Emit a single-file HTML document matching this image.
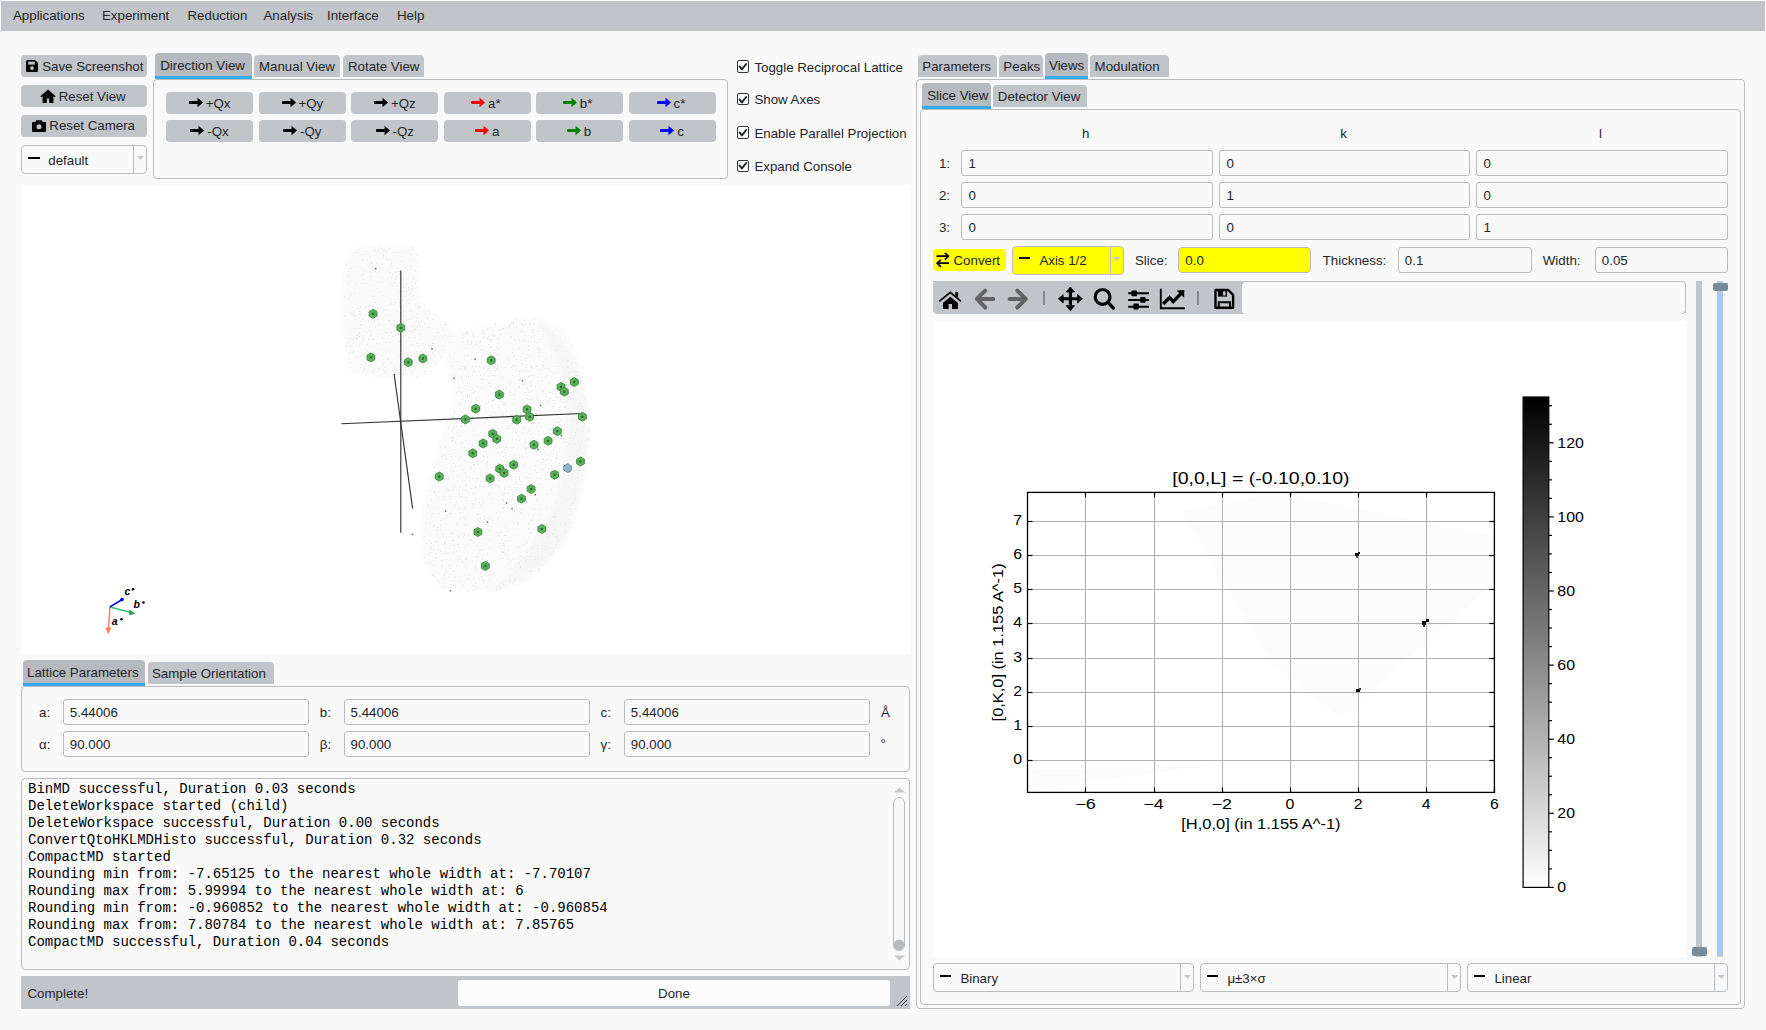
<!DOCTYPE html><html><head><meta charset="utf-8"><style>html,body{margin:0;padding:0;}body{width:1766px;height:1030px;position:relative;overflow:hidden;background:#f9f9f9;}</style></head><body>
<div style="position:absolute;left:0.00px;top:0.00px;width:1766.00px;height:1.00px;background:#fdfdfd"></div>
<div style="position:absolute;left:1.00px;top:1.00px;width:1764.00px;height:30.00px;background:#c1c4c8"></div>
<div style="position:absolute;left:13.00px;top:8.94px;font:13.3px/13.3px 'Liberation Sans', sans-serif;color:#232629;white-space:pre;">Applications</div>
<div style="position:absolute;left:102.00px;top:8.94px;font:13.3px/13.3px 'Liberation Sans', sans-serif;color:#232629;white-space:pre;">Experiment</div>
<div style="position:absolute;left:187.50px;top:8.94px;font:13.3px/13.3px 'Liberation Sans', sans-serif;color:#232629;white-space:pre;">Reduction</div>
<div style="position:absolute;left:263.50px;top:8.94px;font:13.3px/13.3px 'Liberation Sans', sans-serif;color:#232629;white-space:pre;">Analysis</div>
<div style="position:absolute;left:327.00px;top:8.94px;font:13.3px/13.3px 'Liberation Sans', sans-serif;color:#232629;white-space:pre;">Interface</div>
<div style="position:absolute;left:397.00px;top:8.94px;font:13.3px/13.3px 'Liberation Sans', sans-serif;color:#232629;white-space:pre;">Help</div>
<div style="position:absolute;left:21.00px;top:55.00px;width:126.00px;height:22.00px;background:#c1c4c8;border-radius:4px"></div>
<svg style="position:absolute;left:26.00px;top:60.00px;" width="12" height="12" viewBox="0 0 12 12"><path d="M1.5 0h7.5l3 3v7.5q0 1.5-1.5 1.5h-9q-1.5 0-1.5-1.5v-9q0-1.5 1.5-1.5z" fill="#000"/><rect x="2.2" y="1.6" width="6.6" height="3" fill="#c1c4c8"/><circle cx="6" cy="8.1" r="1.9" fill="#c1c4c8"/></svg>
<div style="position:absolute;left:42.20px;top:59.74px;font:13.3px/13.3px 'Liberation Sans', sans-serif;color:#232629;white-space:pre;">Save Screenshot</div>
<div style="position:absolute;left:21.00px;top:85.00px;width:126.00px;height:22.00px;background:#c1c4c8;border-radius:4px"></div>
<svg style="position:absolute;left:40.00px;top:89.00px;" width="16" height="14" viewBox="0 0 16 14"><path d="M8 0.5L0.3 7.2l1 1.1L2.6 7.2V14h4.2V9.6h2.4V14h4.2V7.2l1.3 1.1 1-1.1z" fill="#000"/></svg>
<div style="position:absolute;left:58.70px;top:89.74px;font:13.3px/13.3px 'Liberation Sans', sans-serif;color:#232629;white-space:pre;">Reset View</div>
<div style="position:absolute;left:21.00px;top:115.00px;width:126.00px;height:22.00px;background:#c1c4c8;border-radius:4px"></div>
<svg style="position:absolute;left:32.00px;top:118.50px;" width="14" height="13" viewBox="0 0 14 13"><path d="M4.3 1.2h5.4l1 1.8h2.3q1 0 1 1v8q0 1-1 1h-12q-1 0-1-1v-8q0-1 1-1h2.3z" fill="#000"/><circle cx="7" cy="7.7" r="2.5" fill="#c1c4c8"/></svg>
<div style="position:absolute;left:49.30px;top:119.24px;font:13.3px/13.3px 'Liberation Sans', sans-serif;color:#232629;white-space:pre;">Reset Camera</div>
<div style="position:absolute;box-sizing:border-box;left:21.00px;top:145.00px;width:126.00px;height:29.00px;border:1px solid #b9bdc2;border-radius:4px;background:#f9f9f9"></div>
<div style="position:absolute;left:133.00px;top:146.00px;width:1.00px;height:27.00px;background:#b9bdc2"></div>
<div style="position:absolute;left:28.40px;top:157.30px;width:11.30px;height:2.00px;background:#000"></div>
<div style="position:absolute;left:48.30px;top:153.74px;font:13.3px/13.3px 'Liberation Sans', sans-serif;color:#232629;white-space:pre;">default</div>
<svg style="position:absolute;left:136.50px;top:156.00px;" width="7" height="5" viewBox="0 0 7 5"><path d="M0 0h7l-3.5 4z" fill="#c4c7cb"/></svg>
<div style="position:absolute;left:155.00px;top:53.00px;width:96.50px;height:25.60px;background:#b6b9bd;border-radius:4px 4px 0 0"></div>
<div style="position:absolute;left:155.00px;top:75.60px;width:96.50px;height:3.00px;background:#33aaf2"></div>
<div style="position:absolute;left:160.20px;top:59.04px;font:13.3px/13.3px 'Liberation Sans', sans-serif;color:#232629;white-space:pre;">Direction View</div>
<div style="position:absolute;left:254.00px;top:55.00px;width:86.00px;height:22.00px;background:#c1c4c8;border-radius:4px 4px 0 0"></div>
<div style="position:absolute;left:259.00px;top:59.74px;font:13.3px/13.3px 'Liberation Sans', sans-serif;color:#232629;white-space:pre;">Manual View</div>
<div style="position:absolute;left:343.00px;top:55.00px;width:81.00px;height:22.00px;background:#c1c4c8;border-radius:4px 4px 0 0"></div>
<div style="position:absolute;left:348.00px;top:59.74px;font:13.3px/13.3px 'Liberation Sans', sans-serif;color:#232629;white-space:pre;">Rotate View</div>
<div style="position:absolute;box-sizing:border-box;left:153.00px;top:79.00px;width:575.00px;height:100.00px;border:1px solid #b9bdc2;border-radius:4px"></div>
<div style="position:absolute;left:166.00px;top:92.00px;width:86.50px;height:22.00px;background:#c1c4c8;border-radius:4px"></div>
<svg style="position:absolute;left:188.75px;top:96.80px;" width="14" height="11" viewBox="0 0 14 11"><path d="M1 4h7.5V0.8L14 5.5 8.5 10.2V7H1Q0 7 0 6V5Q0 4 1 4z" fill="#000"/></svg>
<div style="position:absolute;left:205.75px;top:96.74px;font:13.3px/13.3px 'Liberation Sans', sans-serif;color:#232629;white-space:pre;">+Qx</div>
<div style="position:absolute;left:259.00px;top:92.00px;width:86.50px;height:22.00px;background:#c1c4c8;border-radius:4px"></div>
<svg style="position:absolute;left:281.50px;top:96.80px;" width="14" height="11" viewBox="0 0 14 11"><path d="M1 4h7.5V0.8L14 5.5 8.5 10.2V7H1Q0 7 0 6V5Q0 4 1 4z" fill="#000"/></svg>
<div style="position:absolute;left:298.50px;top:96.74px;font:13.3px/13.3px 'Liberation Sans', sans-serif;color:#232629;white-space:pre;">+Qy</div>
<div style="position:absolute;left:351.00px;top:92.00px;width:86.50px;height:22.00px;background:#c1c4c8;border-radius:4px"></div>
<svg style="position:absolute;left:374.00px;top:96.80px;" width="14" height="11" viewBox="0 0 14 11"><path d="M1 4h7.5V0.8L14 5.5 8.5 10.2V7H1Q0 7 0 6V5Q0 4 1 4z" fill="#000"/></svg>
<div style="position:absolute;left:391.00px;top:96.74px;font:13.3px/13.3px 'Liberation Sans', sans-serif;color:#232629;white-space:pre;">+Qz</div>
<div style="position:absolute;left:444.00px;top:92.00px;width:86.50px;height:22.00px;background:#c1c4c8;border-radius:4px"></div>
<svg style="position:absolute;left:471.00px;top:96.80px;" width="14" height="11" viewBox="0 0 14 11"><path d="M1 4h7.5V0.8L14 5.5 8.5 10.2V7H1Q0 7 0 6V5Q0 4 1 4z" fill="#ff0000"/></svg>
<div style="position:absolute;left:488.00px;top:96.74px;font:13.3px/13.3px 'Liberation Sans', sans-serif;color:#232629;white-space:pre;">a*</div>
<div style="position:absolute;left:536.00px;top:92.00px;width:86.50px;height:22.00px;background:#c1c4c8;border-radius:4px"></div>
<svg style="position:absolute;left:562.75px;top:96.80px;" width="14" height="11" viewBox="0 0 14 11"><path d="M1 4h7.5V0.8L14 5.5 8.5 10.2V7H1Q0 7 0 6V5Q0 4 1 4z" fill="#008000"/></svg>
<div style="position:absolute;left:579.75px;top:96.74px;font:13.3px/13.3px 'Liberation Sans', sans-serif;color:#232629;white-space:pre;">b*</div>
<div style="position:absolute;left:629.00px;top:92.00px;width:86.50px;height:22.00px;background:#c1c4c8;border-radius:4px"></div>
<svg style="position:absolute;left:656.50px;top:96.80px;" width="14" height="11" viewBox="0 0 14 11"><path d="M1 4h7.5V0.8L14 5.5 8.5 10.2V7H1Q0 7 0 6V5Q0 4 1 4z" fill="#0000ff"/></svg>
<div style="position:absolute;left:673.50px;top:96.74px;font:13.3px/13.3px 'Liberation Sans', sans-serif;color:#232629;white-space:pre;">c*</div>
<div style="position:absolute;left:166.00px;top:120.00px;width:86.50px;height:22.00px;background:#c1c4c8;border-radius:4px"></div>
<svg style="position:absolute;left:190.25px;top:124.80px;" width="14" height="11" viewBox="0 0 14 11"><path d="M1 4h7.5V0.8L14 5.5 8.5 10.2V7H1Q0 7 0 6V5Q0 4 1 4z" fill="#000"/></svg>
<div style="position:absolute;left:207.25px;top:124.74px;font:13.3px/13.3px 'Liberation Sans', sans-serif;color:#232629;white-space:pre;">-Qx</div>
<div style="position:absolute;left:259.00px;top:120.00px;width:86.50px;height:22.00px;background:#c1c4c8;border-radius:4px"></div>
<svg style="position:absolute;left:283.00px;top:124.80px;" width="14" height="11" viewBox="0 0 14 11"><path d="M1 4h7.5V0.8L14 5.5 8.5 10.2V7H1Q0 7 0 6V5Q0 4 1 4z" fill="#000"/></svg>
<div style="position:absolute;left:300.00px;top:124.74px;font:13.3px/13.3px 'Liberation Sans', sans-serif;color:#232629;white-space:pre;">-Qy</div>
<div style="position:absolute;left:351.00px;top:120.00px;width:86.50px;height:22.00px;background:#c1c4c8;border-radius:4px"></div>
<svg style="position:absolute;left:375.50px;top:124.80px;" width="14" height="11" viewBox="0 0 14 11"><path d="M1 4h7.5V0.8L14 5.5 8.5 10.2V7H1Q0 7 0 6V5Q0 4 1 4z" fill="#000"/></svg>
<div style="position:absolute;left:392.50px;top:124.74px;font:13.3px/13.3px 'Liberation Sans', sans-serif;color:#232629;white-space:pre;">-Qz</div>
<div style="position:absolute;left:444.00px;top:120.00px;width:86.50px;height:22.00px;background:#c1c4c8;border-radius:4px"></div>
<svg style="position:absolute;left:475.00px;top:124.80px;" width="14" height="11" viewBox="0 0 14 11"><path d="M1 4h7.5V0.8L14 5.5 8.5 10.2V7H1Q0 7 0 6V5Q0 4 1 4z" fill="#ff0000"/></svg>
<div style="position:absolute;left:492.00px;top:124.74px;font:13.3px/13.3px 'Liberation Sans', sans-serif;color:#232629;white-space:pre;">a</div>
<div style="position:absolute;left:536.00px;top:120.00px;width:86.50px;height:22.00px;background:#c1c4c8;border-radius:4px"></div>
<svg style="position:absolute;left:566.75px;top:124.80px;" width="14" height="11" viewBox="0 0 14 11"><path d="M1 4h7.5V0.8L14 5.5 8.5 10.2V7H1Q0 7 0 6V5Q0 4 1 4z" fill="#008000"/></svg>
<div style="position:absolute;left:583.75px;top:124.74px;font:13.3px/13.3px 'Liberation Sans', sans-serif;color:#232629;white-space:pre;">b</div>
<div style="position:absolute;left:629.00px;top:120.00px;width:86.50px;height:22.00px;background:#c1c4c8;border-radius:4px"></div>
<svg style="position:absolute;left:660.25px;top:124.80px;" width="14" height="11" viewBox="0 0 14 11"><path d="M1 4h7.5V0.8L14 5.5 8.5 10.2V7H1Q0 7 0 6V5Q0 4 1 4z" fill="#0000ff"/></svg>
<div style="position:absolute;left:677.25px;top:124.74px;font:13.3px/13.3px 'Liberation Sans', sans-serif;color:#232629;white-space:pre;">c</div>
<div style="position:absolute;box-sizing:border-box;left:736.50px;top:60.40px;width:12.50px;height:12.20px;border:1px solid #31363b;border-radius:2px;background:#fcfcfc"></div>
<svg style="position:absolute;left:738.00px;top:61.90px;" width="10" height="9" viewBox="0 0 10 9"><path d="M1.6 4.6L3.9 7.4 8.2 2" stroke="#232629" stroke-width="2" fill="none" stroke-linejoin="round" stroke-linecap="round"/></svg>
<div style="position:absolute;left:754.40px;top:60.74px;font:13.3px/13.3px 'Liberation Sans', sans-serif;color:#232629;white-space:pre;">Toggle Reciprocal Lattice</div>
<div style="position:absolute;box-sizing:border-box;left:736.50px;top:93.00px;width:12.50px;height:12.20px;border:1px solid #31363b;border-radius:2px;background:#fcfcfc"></div>
<svg style="position:absolute;left:738.00px;top:94.50px;" width="10" height="9" viewBox="0 0 10 9"><path d="M1.6 4.6L3.9 7.4 8.2 2" stroke="#232629" stroke-width="2" fill="none" stroke-linejoin="round" stroke-linecap="round"/></svg>
<div style="position:absolute;left:754.40px;top:93.34px;font:13.3px/13.3px 'Liberation Sans', sans-serif;color:#232629;white-space:pre;">Show Axes</div>
<div style="position:absolute;box-sizing:border-box;left:736.50px;top:126.40px;width:12.50px;height:12.20px;border:1px solid #31363b;border-radius:2px;background:#fcfcfc"></div>
<svg style="position:absolute;left:738.00px;top:127.90px;" width="10" height="9" viewBox="0 0 10 9"><path d="M1.6 4.6L3.9 7.4 8.2 2" stroke="#232629" stroke-width="2" fill="none" stroke-linejoin="round" stroke-linecap="round"/></svg>
<div style="position:absolute;left:754.40px;top:126.74px;font:13.3px/13.3px 'Liberation Sans', sans-serif;color:#232629;white-space:pre;">Enable Parallel Projection</div>
<div style="position:absolute;box-sizing:border-box;left:736.50px;top:159.60px;width:12.50px;height:12.20px;border:1px solid #31363b;border-radius:2px;background:#fcfcfc"></div>
<svg style="position:absolute;left:738.00px;top:161.10px;" width="10" height="9" viewBox="0 0 10 9"><path d="M1.6 4.6L3.9 7.4 8.2 2" stroke="#232629" stroke-width="2" fill="none" stroke-linejoin="round" stroke-linecap="round"/></svg>
<div style="position:absolute;left:754.40px;top:159.94px;font:13.3px/13.3px 'Liberation Sans', sans-serif;color:#232629;white-space:pre;">Expand Console</div>
<div style="position:absolute;left:21.00px;top:185.00px;width:889.00px;height:469.00px;background:#fff"></div>
<div style="position:absolute;left:23.00px;top:659.80px;width:122.30px;height:26.00px;background:#b6b9bd;border-radius:4px 4px 0 0"></div>
<div style="position:absolute;left:23.00px;top:682.80px;width:122.30px;height:3.00px;background:#33aaf2"></div>
<div style="position:absolute;left:27.00px;top:666.24px;font:13.3px/13.3px 'Liberation Sans', sans-serif;color:#232629;white-space:pre;">Lattice Parameters</div>
<div style="position:absolute;left:148.40px;top:661.90px;width:126.10px;height:22.10px;background:#c1c4c8;border-radius:4px 4px 0 0"></div>
<div style="position:absolute;left:152.00px;top:667.24px;font:13.3px/13.3px 'Liberation Sans', sans-serif;color:#232629;white-space:pre;">Sample Orientation</div>
<div style="position:absolute;box-sizing:border-box;left:21.00px;top:686.00px;width:889.00px;height:86.00px;border:1px solid #b9bdc2;border-radius:4px"></div>
<div style="position:absolute;left:39.00px;top:705.74px;font:13.3px/13.3px 'Liberation Sans', sans-serif;color:#232629;white-space:pre;">a:</div>
<div style="position:absolute;box-sizing:border-box;left:63.00px;top:699.00px;width:246.00px;height:26.00px;border:1px solid #b9bdc2;border-radius:3px;background:#f9f9f9"></div>
<div style="position:absolute;left:69.80px;top:705.74px;font:13.3px/13.3px 'Liberation Sans', sans-serif;color:#232629;white-space:pre;">5.44006</div>
<div style="position:absolute;left:319.80px;top:705.74px;font:13.3px/13.3px 'Liberation Sans', sans-serif;color:#232629;white-space:pre;">b:</div>
<div style="position:absolute;box-sizing:border-box;left:344.00px;top:699.00px;width:246.00px;height:26.00px;border:1px solid #b9bdc2;border-radius:3px;background:#f9f9f9"></div>
<div style="position:absolute;left:350.55px;top:705.74px;font:13.3px/13.3px 'Liberation Sans', sans-serif;color:#232629;white-space:pre;">5.44006</div>
<div style="position:absolute;left:600.50px;top:705.74px;font:13.3px/13.3px 'Liberation Sans', sans-serif;color:#232629;white-space:pre;">c:</div>
<div style="position:absolute;box-sizing:border-box;left:624.00px;top:699.00px;width:246.00px;height:26.00px;border:1px solid #b9bdc2;border-radius:3px;background:#f9f9f9"></div>
<div style="position:absolute;left:630.80px;top:705.74px;font:13.3px/13.3px 'Liberation Sans', sans-serif;color:#232629;white-space:pre;">5.44006</div>
<div style="position:absolute;left:39.00px;top:737.74px;font:13.3px/13.3px 'Liberation Sans', sans-serif;color:#232629;white-space:pre;">α:</div>
<div style="position:absolute;box-sizing:border-box;left:63.00px;top:731.00px;width:246.00px;height:26.00px;border:1px solid #b9bdc2;border-radius:3px;background:#f9f9f9"></div>
<div style="position:absolute;left:69.80px;top:737.74px;font:13.3px/13.3px 'Liberation Sans', sans-serif;color:#232629;white-space:pre;">90.000</div>
<div style="position:absolute;left:319.80px;top:737.74px;font:13.3px/13.3px 'Liberation Sans', sans-serif;color:#232629;white-space:pre;">β:</div>
<div style="position:absolute;box-sizing:border-box;left:344.00px;top:731.00px;width:246.00px;height:26.00px;border:1px solid #b9bdc2;border-radius:3px;background:#f9f9f9"></div>
<div style="position:absolute;left:350.55px;top:737.74px;font:13.3px/13.3px 'Liberation Sans', sans-serif;color:#232629;white-space:pre;">90.000</div>
<div style="position:absolute;left:600.50px;top:737.74px;font:13.3px/13.3px 'Liberation Sans', sans-serif;color:#232629;white-space:pre;">γ:</div>
<div style="position:absolute;box-sizing:border-box;left:624.00px;top:731.00px;width:246.00px;height:26.00px;border:1px solid #b9bdc2;border-radius:3px;background:#f9f9f9"></div>
<div style="position:absolute;left:630.80px;top:737.74px;font:13.3px/13.3px 'Liberation Sans', sans-serif;color:#232629;white-space:pre;">90.000</div>
<div style="position:absolute;left:881.00px;top:705.74px;font:13.3px/13.3px 'Liberation Sans', sans-serif;color:#232629;white-space:pre;">Å</div>
<div style="position:absolute;left:880.50px;top:737.44px;font:13.3px/13.3px 'Liberation Sans', sans-serif;color:#232629;white-space:pre;">°</div>
<div style="position:absolute;box-sizing:border-box;left:21.00px;top:778.00px;width:889.00px;height:192.00px;border:1px solid #b9bdc2;border-radius:4px;background:#f9f9f9"></div>
<div style="position:absolute;left:28.00px;top:782.17px;font:14px/14px 'Liberation Mono', monospace;color:#000;white-space:pre;">BinMD successful, Duration 0.03 seconds</div>
<div style="position:absolute;left:28.00px;top:799.17px;font:14px/14px 'Liberation Mono', monospace;color:#000;white-space:pre;">DeleteWorkspace started (child)</div>
<div style="position:absolute;left:28.00px;top:816.17px;font:14px/14px 'Liberation Mono', monospace;color:#000;white-space:pre;">DeleteWorkspace successful, Duration 0.00 seconds</div>
<div style="position:absolute;left:28.00px;top:833.17px;font:14px/14px 'Liberation Mono', monospace;color:#000;white-space:pre;">ConvertQtoHKLMDHisto successful, Duration 0.32 seconds</div>
<div style="position:absolute;left:28.00px;top:850.17px;font:14px/14px 'Liberation Mono', monospace;color:#000;white-space:pre;">CompactMD started</div>
<div style="position:absolute;left:28.00px;top:867.17px;font:14px/14px 'Liberation Mono', monospace;color:#000;white-space:pre;">Rounding min from: -7.65125 to the nearest whole width at: -7.70107</div>
<div style="position:absolute;left:28.00px;top:884.17px;font:14px/14px 'Liberation Mono', monospace;color:#000;white-space:pre;">Rounding max from: 5.99994 to the nearest whole width at: 6</div>
<div style="position:absolute;left:28.00px;top:901.17px;font:14px/14px 'Liberation Mono', monospace;color:#000;white-space:pre;">Rounding min from: -0.960852 to the nearest whole width at: -0.960854</div>
<div style="position:absolute;left:28.00px;top:918.17px;font:14px/14px 'Liberation Mono', monospace;color:#000;white-space:pre;">Rounding max from: 7.80784 to the nearest whole width at: 7.85765</div>
<div style="position:absolute;left:28.00px;top:935.17px;font:14px/14px 'Liberation Mono', monospace;color:#000;white-space:pre;">CompactMD successful, Duration 0.04 seconds</div>
<svg style="position:absolute;left:893.00px;top:786.00px;" width="13" height="8" viewBox="0 0 13 8"><path d="M1 6.5L6.5 1.5 12 6.5z" fill="#c4c7cb"/></svg>
<div style="position:absolute;box-sizing:border-box;left:893.00px;top:797.00px;width:12.00px;height:154.00px;border:1px solid #b9bdc2;border-radius:6px"></div>
<svg style="position:absolute;left:893.00px;top:939.00px;" width="12" height="12" viewBox="0 0 12 12"><circle cx="6" cy="6" r="5.5" fill="#b7bbbf"/></svg>
<svg style="position:absolute;left:893.00px;top:954.00px;" width="13" height="8" viewBox="0 0 13 8"><path d="M1 1.5L6.5 6.5 12 1.5z" fill="#c4c7cb"/></svg>
<div style="position:absolute;left:21.00px;top:976.00px;width:889.00px;height:33.00px;background:#c1c4c8"></div>
<div style="position:absolute;left:27.50px;top:986.74px;font:13.3px/13.3px 'Liberation Sans', sans-serif;color:#232629;white-space:pre;">Complete!</div>
<div style="position:absolute;left:458.00px;top:980.00px;width:432.00px;height:26.00px;background:#fcfcfc;border-radius:3px"></div>
<div style="position:absolute;left:174.00px;width:1000px;text-align:center;top:986.74px;font:13.3px/13.3px 'Liberation Sans', sans-serif;color:#232629;white-space:pre;">Done</div>
<svg style="position:absolute;left:896.00px;top:995.00px;" width="12" height="12" viewBox="0 0 12 12"><path d="M11 1L1 11M11 5L5 11M11 9L9 11" stroke="#31363b" stroke-width="1"/></svg>
<div style="position:absolute;left:918.00px;top:55.00px;width:78.50px;height:22.00px;background:#c1c4c8;border-radius:4px 4px 0 0"></div>
<div style="position:absolute;left:922.30px;top:59.94px;font:13.3px/13.3px 'Liberation Sans', sans-serif;color:#232629;white-space:pre;">Parameters</div>
<div style="position:absolute;left:999.00px;top:55.00px;width:44.00px;height:22.00px;background:#c1c4c8;border-radius:4px 4px 0 0"></div>
<div style="position:absolute;left:1003.30px;top:59.94px;font:13.3px/13.3px 'Liberation Sans', sans-serif;color:#232629;white-space:pre;">Peaks</div>
<div style="position:absolute;left:1045.00px;top:53.00px;width:42.50px;height:25.60px;background:#b6b9bd;border-radius:4px 4px 0 0"></div>
<div style="position:absolute;left:1045.00px;top:75.60px;width:42.50px;height:3.00px;background:#33aaf2"></div>
<div style="position:absolute;left:1049.00px;top:59.24px;font:13.3px/13.3px 'Liberation Sans', sans-serif;color:#232629;white-space:pre;">Views</div>
<div style="position:absolute;left:1090.00px;top:55.00px;width:78.50px;height:22.00px;background:#c1c4c8;border-radius:4px 4px 0 0"></div>
<div style="position:absolute;left:1094.60px;top:59.94px;font:13.3px/13.3px 'Liberation Sans', sans-serif;color:#232629;white-space:pre;">Modulation</div>
<div style="position:absolute;box-sizing:border-box;left:916.00px;top:79.00px;width:829.00px;height:930.00px;border:1px solid #b9bdc2;border-radius:4px"></div>
<div style="position:absolute;left:922.00px;top:83.00px;width:68.50px;height:25.50px;background:#b6b9bd;border-radius:4px 4px 0 0"></div>
<div style="position:absolute;left:922.00px;top:105.50px;width:68.50px;height:3.00px;background:#33aaf2"></div>
<div style="position:absolute;left:927.20px;top:89.04px;font:13.3px/13.3px 'Liberation Sans', sans-serif;color:#232629;white-space:pre;">Slice View</div>
<div style="position:absolute;left:993.00px;top:85.40px;width:94.00px;height:21.20px;background:#c1c4c8;border-radius:4px 4px 0 0"></div>
<div style="position:absolute;left:997.80px;top:89.74px;font:13.3px/13.3px 'Liberation Sans', sans-serif;color:#232629;white-space:pre;">Detector View</div>
<div style="position:absolute;box-sizing:border-box;left:920.00px;top:109.00px;width:821.00px;height:896.00px;border:1px solid #b9bdc2;border-radius:4px"></div>
<div style="position:absolute;left:585.60px;width:1000px;text-align:center;top:126.54px;font:13.3px/13.3px 'Liberation Sans', sans-serif;color:#232629;white-space:pre;">h</div>
<div style="position:absolute;left:843.60px;width:1000px;text-align:center;top:126.54px;font:13.3px/13.3px 'Liberation Sans', sans-serif;color:#232629;white-space:pre;">k</div>
<div style="position:absolute;left:1100.40px;width:1000px;text-align:center;top:126.54px;font:13.3px/13.3px 'Liberation Sans', sans-serif;color:#232629;white-space:pre;">l</div>
<div style="position:absolute;left:938.90px;top:157.04px;font:13.3px/13.3px 'Liberation Sans', sans-serif;color:#232629;white-space:pre;">1:</div>
<div style="position:absolute;box-sizing:border-box;left:961.00px;top:150.00px;width:252.00px;height:26.00px;border:1px solid #b9bdc2;border-radius:3px;background:#f9f9f9"></div>
<div style="position:absolute;left:968.50px;top:157.04px;font:13.3px/13.3px 'Liberation Sans', sans-serif;color:#232629;white-space:pre;">1</div>
<div style="position:absolute;box-sizing:border-box;left:1219.00px;top:150.00px;width:251.00px;height:26.00px;border:1px solid #b9bdc2;border-radius:3px;background:#f9f9f9"></div>
<div style="position:absolute;left:1226.50px;top:157.04px;font:13.3px/13.3px 'Liberation Sans', sans-serif;color:#232629;white-space:pre;">0</div>
<div style="position:absolute;box-sizing:border-box;left:1476.00px;top:150.00px;width:252.00px;height:26.00px;border:1px solid #b9bdc2;border-radius:3px;background:#f9f9f9"></div>
<div style="position:absolute;left:1483.50px;top:157.04px;font:13.3px/13.3px 'Liberation Sans', sans-serif;color:#232629;white-space:pre;">0</div>
<div style="position:absolute;left:938.90px;top:189.04px;font:13.3px/13.3px 'Liberation Sans', sans-serif;color:#232629;white-space:pre;">2:</div>
<div style="position:absolute;box-sizing:border-box;left:961.00px;top:182.00px;width:252.00px;height:26.00px;border:1px solid #b9bdc2;border-radius:3px;background:#f9f9f9"></div>
<div style="position:absolute;left:968.50px;top:189.04px;font:13.3px/13.3px 'Liberation Sans', sans-serif;color:#232629;white-space:pre;">0</div>
<div style="position:absolute;box-sizing:border-box;left:1219.00px;top:182.00px;width:251.00px;height:26.00px;border:1px solid #b9bdc2;border-radius:3px;background:#f9f9f9"></div>
<div style="position:absolute;left:1226.50px;top:189.04px;font:13.3px/13.3px 'Liberation Sans', sans-serif;color:#232629;white-space:pre;">1</div>
<div style="position:absolute;box-sizing:border-box;left:1476.00px;top:182.00px;width:252.00px;height:26.00px;border:1px solid #b9bdc2;border-radius:3px;background:#f9f9f9"></div>
<div style="position:absolute;left:1483.50px;top:189.04px;font:13.3px/13.3px 'Liberation Sans', sans-serif;color:#232629;white-space:pre;">0</div>
<div style="position:absolute;left:938.90px;top:221.04px;font:13.3px/13.3px 'Liberation Sans', sans-serif;color:#232629;white-space:pre;">3:</div>
<div style="position:absolute;box-sizing:border-box;left:961.00px;top:214.00px;width:252.00px;height:26.00px;border:1px solid #b9bdc2;border-radius:3px;background:#f9f9f9"></div>
<div style="position:absolute;left:968.50px;top:221.04px;font:13.3px/13.3px 'Liberation Sans', sans-serif;color:#232629;white-space:pre;">0</div>
<div style="position:absolute;box-sizing:border-box;left:1219.00px;top:214.00px;width:251.00px;height:26.00px;border:1px solid #b9bdc2;border-radius:3px;background:#f9f9f9"></div>
<div style="position:absolute;left:1226.50px;top:221.04px;font:13.3px/13.3px 'Liberation Sans', sans-serif;color:#232629;white-space:pre;">0</div>
<div style="position:absolute;box-sizing:border-box;left:1476.00px;top:214.00px;width:252.00px;height:26.00px;border:1px solid #b9bdc2;border-radius:3px;background:#f9f9f9"></div>
<div style="position:absolute;left:1483.50px;top:221.04px;font:13.3px/13.3px 'Liberation Sans', sans-serif;color:#232629;white-space:pre;">1</div>
<div style="position:absolute;left:933.00px;top:249.00px;width:72.70px;height:22.00px;background:#ffff00;border-radius:4px"></div>
<svg style="position:absolute;left:933.00px;top:249.00px;" width="20" height="20" viewBox="0 0 20 20"><path d="M4.2 7.2H15.4M12.4 4.4L15.5 7.2 12.4 10M15.4 14.2H4.2M7.4 11.3L4.1 14.2 7.4 17.3" stroke="#000" stroke-width="1.7" fill="none" stroke-linecap="round" stroke-linejoin="round"/></svg>
<div style="position:absolute;left:953.50px;top:253.74px;font:13.3px/13.3px 'Liberation Sans', sans-serif;color:#232629;white-space:pre;">Convert</div>
<div style="position:absolute;box-sizing:border-box;left:1012.00px;top:246.00px;width:112.00px;height:29.00px;border:1px solid #b9bdc2;border-radius:4px;background:#ffff00"></div>
<div style="position:absolute;left:1110.00px;top:247.00px;width:1.00px;height:27.00px;background:#b9bdc2"></div>
<div style="position:absolute;left:1018.70px;top:257.20px;width:11.70px;height:2.00px;background:#000"></div>
<div style="position:absolute;left:1039.40px;top:254.24px;font:13.3px/13.3px 'Liberation Sans', sans-serif;color:#232629;white-space:pre;">Axis 1/2</div>
<svg style="position:absolute;left:1113.00px;top:257.00px;" width="7" height="5" viewBox="0 0 7 5"><path d="M0 0h7l-3.5 4z" fill="#c4c7cb"/></svg>
<div style="position:absolute;left:1135.00px;top:254.24px;font:13.3px/13.3px 'Liberation Sans', sans-serif;color:#232629;white-space:pre;">Slice:</div>
<div style="position:absolute;box-sizing:border-box;left:1178.00px;top:247.00px;width:133.00px;height:26.00px;border:1px solid #b9bdc2;border-radius:4px;background:#ffff00"></div>
<div style="position:absolute;left:1185.30px;top:254.24px;font:13.3px/13.3px 'Liberation Sans', sans-serif;color:#232629;white-space:pre;">0.0</div>
<div style="position:absolute;left:1322.70px;top:254.24px;font:13.3px/13.3px 'Liberation Sans', sans-serif;color:#232629;white-space:pre;">Thickness:</div>
<div style="position:absolute;box-sizing:border-box;left:1398.00px;top:247.00px;width:134.00px;height:26.00px;border:1px solid #b9bdc2;border-radius:3px;background:#f9f9f9"></div>
<div style="position:absolute;left:1404.80px;top:254.24px;font:13.3px/13.3px 'Liberation Sans', sans-serif;color:#232629;white-space:pre;">0.1</div>
<div style="position:absolute;left:1542.80px;top:254.24px;font:13.3px/13.3px 'Liberation Sans', sans-serif;color:#232629;white-space:pre;">Width:</div>
<div style="position:absolute;box-sizing:border-box;left:1595.00px;top:247.00px;width:133.00px;height:26.00px;border:1px solid #b9bdc2;border-radius:3px;background:#f9f9f9"></div>
<div style="position:absolute;left:1601.80px;top:254.24px;font:13.3px/13.3px 'Liberation Sans', sans-serif;color:#232629;white-space:pre;">0.05</div>
<div style="position:absolute;box-sizing:border-box;left:933.00px;top:281.30px;width:753.00px;height:32.20px;border-top:1px solid #b9bdc2;border-right:1px solid #b9bdc2;border-radius:0 4px 0 0"></div>
<svg style="position:absolute;left:1680.00px;top:309.00px;" width="6" height="5" viewBox="0 0 6 5"><path d="M5.5 0V1.5Q5.5 4.5 2 4.5" stroke="#b9bdc2" stroke-width="1" fill="none"/></svg>
<div style="position:absolute;left:933.00px;top:281.00px;width:314.00px;height:32.80px;background:#c1c4c8;border-radius:4px 0 0 4px"></div>
<div style="position:absolute;left:1242.40px;top:282.20px;width:17.60px;height:31.60px;background:#f9f9f9;border-radius:4px 0 0 4px"></div>
<svg style="position:absolute;left:933.00px;top:281.00px;" width="310" height="33" viewBox="933 281 310 33"><path d="M939.8 300.9L950.3 292.4 960.5 300.9" stroke="#000" stroke-width="1.7" fill="none" stroke-linecap="round"/><rect x="955.3" y="292" width="2.8" height="5.5" fill="#000"/><path d="M943 302.7L950.3 296.8 957.9 302.7V309H952V304H948.6V309H943Z" fill="#000"/><path d="M985.3 290.6L976.8 298.9 985.3 307.5M977 298.9H993.2" stroke="#636363" stroke-width="4" fill="none" stroke-linecap="round" stroke-linejoin="round"/><path d="M1017.3 290.6L1025.8 298.9 1017.3 307.5M1025.6 298.9H1009.6" stroke="#636363" stroke-width="4" fill="none" stroke-linecap="round" stroke-linejoin="round"/><line x1="1044" y1="291" x2="1044" y2="305" stroke="#68717a" stroke-width="1.4"/><line x1="1198" y1="291" x2="1198" y2="305" stroke="#68717a" stroke-width="1.4"/><path d="M1070.4 290V307.6M1061.6 298.8H1079.2" stroke="#000" stroke-width="3.1"/><path d="M1066.2 292L1070.4 287 1074.6 292Z M1066.2 305.6L1070.4 310.8 1074.6 305.6Z M1063.2 294.6L1058.4 298.8 1063.2 303Z M1077.6 294.6L1082.4 298.8 1077.6 303Z" fill="#000" stroke="#000" stroke-width="0.8" stroke-linejoin="round"/><circle cx="1102.6" cy="296.9" r="7.4" stroke="#000" stroke-width="3.2" fill="none"/><path d="M1108.2 302.6L1113.4 308" stroke="#000" stroke-width="3.4" stroke-linecap="round"/><path d="M1128.2 293.3H1149M1128.2 300H1149M1128.2 306.7H1149" stroke="#000" stroke-width="1.9"/><rect x="1131.4" y="290.4" width="5.6" height="5.8" rx="1" fill="#000"/><rect x="1140.2" y="297" width="5.4" height="5.8" rx="1" fill="#000"/><rect x="1133.4" y="303.6" width="5.4" height="5.8" rx="1" fill="#000"/><path d="M1160.8 288.8V308.2H1185" stroke="#000" stroke-width="1.9" fill="none"/><path d="M1163.2 304L1169.5 297.6 1173.2 301.6 1181.5 293" stroke="#000" stroke-width="3.3" fill="none"/><path d="M1176.6 290.4L1184.4 290.1 1184.1 297.8Z" fill="#000"/><path d="M1216.3 290H1228.2L1233.1 294.9V307.7H1215.5V290Z" stroke="#000" stroke-width="2.4" fill="none" stroke-linejoin="round"/><rect x="1218" y="290" width="9" height="6.6" fill="#000"/><rect x="1223.1" y="291.3" width="2.5" height="4.2" fill="#c1c4c8"/><path d="M1218.8 308V302.2H1230V308" stroke="#000" stroke-width="2" fill="none"/></svg>
<div style="position:absolute;left:933.00px;top:321.00px;width:753.00px;height:636.00px;background:#fff"></div>
<div style="position:absolute;left:1696.20px;top:281.00px;width:5.70px;height:676.00px;background:#c1c4c8"></div>
<div style="position:absolute;left:1692.00px;top:946.50px;width:15.00px;height:9.30px;background:#778b9b;border-radius:2px"></div>
<div style="position:absolute;left:1696.20px;top:955.80px;width:5.70px;height:1.20px;background:#c4c7cb"></div>
<div style="position:absolute;left:1717.30px;top:291.00px;width:5.40px;height:666.00px;background:#9fcaff;border:0.5px solid #c4c7cb;box-sizing:border-box"></div>
<div style="position:absolute;left:1713.00px;top:282.50px;width:15.00px;height:8.80px;background:#778b9b;border-radius:2px"></div>
<div style="position:absolute;left:1717.30px;top:281.00px;width:5.40px;height:1.50px;background:#c4c7cb"></div>
<div style="position:absolute;box-sizing:border-box;left:933.00px;top:963.00px;width:261.00px;height:29.00px;border:1px solid #b9bdc2;border-radius:4px;background:#f9f9f9"></div>
<div style="position:absolute;left:1180.00px;top:964.00px;width:1.00px;height:27.00px;background:#b9bdc2"></div>
<div style="position:absolute;left:939.70px;top:974.80px;width:11.60px;height:2.40px;background:#000"></div>
<div style="position:absolute;left:960.40px;top:971.94px;font:13.3px/13.3px 'Liberation Sans', sans-serif;color:#232629;white-space:pre;">Binary</div>
<svg style="position:absolute;left:1184.00px;top:974.50px;" width="7" height="5" viewBox="0 0 7 5"><path d="M0 0h7l-3.5 4z" fill="#c4c7cb"/></svg>
<div style="position:absolute;box-sizing:border-box;left:1200.00px;top:963.00px;width:261.00px;height:29.00px;border:1px solid #b9bdc2;border-radius:4px;background:#f9f9f9"></div>
<div style="position:absolute;left:1447.00px;top:964.00px;width:1.00px;height:27.00px;background:#b9bdc2"></div>
<div style="position:absolute;left:1206.70px;top:974.80px;width:11.60px;height:2.40px;background:#000"></div>
<div style="position:absolute;left:1227.40px;top:971.94px;font:13.3px/13.3px 'Liberation Sans', sans-serif;color:#232629;white-space:pre;">μ±3×σ</div>
<svg style="position:absolute;left:1451.00px;top:974.50px;" width="7" height="5" viewBox="0 0 7 5"><path d="M0 0h7l-3.5 4z" fill="#c4c7cb"/></svg>
<div style="position:absolute;box-sizing:border-box;left:1467.00px;top:963.00px;width:261.00px;height:29.00px;border:1px solid #b9bdc2;border-radius:4px;background:#f9f9f9"></div>
<div style="position:absolute;left:1714.00px;top:964.00px;width:1.00px;height:27.00px;background:#b9bdc2"></div>
<div style="position:absolute;left:1473.70px;top:974.80px;width:11.60px;height:2.40px;background:#000"></div>
<div style="position:absolute;left:1494.40px;top:971.94px;font:13.3px/13.3px 'Liberation Sans', sans-serif;color:#232629;white-space:pre;">Linear</div>
<svg style="position:absolute;left:1718.00px;top:974.50px;" width="7" height="5" viewBox="0 0 7 5"><path d="M0 0h7l-3.5 4z" fill="#c4c7cb"/></svg>
<svg style="position:absolute;left:933px;top:321px" width="753" height="636" viewBox="933 321 753 636">
<g fill="#f5f5f5" opacity="0.25">
<path d="M1180.8858000141595 511.37090911812453 L1279.7109282705658 492.66024828253137 L1494.4 535.184477454334 L1494.4 582.811614126753 L1341.0506630504042 718.8891474765214 L1272.895402183917 664.458134136614 Z"/>
<path d="M1027.5364630645636 769.9182224826847 L1204.74014131743 766.5162841489405 L1027.5364630645636 790.3298524851499 Z"/>
</g>
<g stroke="#b0b0b0" stroke-width="1">
<line x1="1085.5" y1="492.4" x2="1085.5" y2="792.4"/>
<line x1="1154.5" y1="492.4" x2="1154.5" y2="792.4"/>
<line x1="1222.5" y1="492.4" x2="1222.5" y2="792.4"/>
<line x1="1290.5" y1="492.4" x2="1290.5" y2="792.4"/>
<line x1="1358.5" y1="492.4" x2="1358.5" y2="792.4"/>
<line x1="1426.5" y1="492.4" x2="1426.5" y2="792.4"/>
<line x1="1494.5" y1="492.4" x2="1494.5" y2="792.4"/>
<line x1="1027.5" y1="760.5" x2="1494.4" y2="760.5"/>
<line x1="1027.5" y1="726.5" x2="1494.4" y2="726.5"/>
<line x1="1027.5" y1="692.5" x2="1494.4" y2="692.5"/>
<line x1="1027.5" y1="658.5" x2="1494.4" y2="658.5"/>
<line x1="1027.5" y1="623.5" x2="1494.4" y2="623.5"/>
<line x1="1027.5" y1="589.5" x2="1494.4" y2="589.5"/>
<line x1="1027.5" y1="555.5" x2="1494.4" y2="555.5"/>
<line x1="1027.5" y1="521.5" x2="1494.4" y2="521.5"/>
</g>
<g fill="#000">
<rect x="1355" y="553" width="4" height="3" fill="#000"/>
<rect x="1358" y="552" width="2" height="2" fill="#111"/>
<rect x="1356" y="556" width="2" height="2" fill="#555"/>
<rect x="1422" y="621" width="4" height="4" fill="#000"/>
<rect x="1426" y="619" width="3" height="3" fill="#000"/>
<rect x="1423" y="625" width="2" height="2" fill="#333"/>
<rect x="1356" y="689" width="4" height="3" fill="#000"/>
<rect x="1359" y="688" width="2" height="2" fill="#333"/>
<rect x="1219" y="554" width="2" height="2" fill="#ddd"/>
<rect x="1289" y="622" width="2" height="2" fill="#ddd"/>
</g>
<rect x="1027.5" y="492.4" width="466.9000000000001" height="300.0" fill="none" stroke="#000" stroke-width="1.3"/>
<g stroke="#000" stroke-width="1.2">
<line x1="1085.5" y1="792.4" x2="1085.5" y2="787.4"/><line x1="1085.5" y1="492.4" x2="1085.5" y2="497.4"/>
<line x1="1154.5" y1="792.4" x2="1154.5" y2="787.4"/><line x1="1154.5" y1="492.4" x2="1154.5" y2="497.4"/>
<line x1="1222.5" y1="792.4" x2="1222.5" y2="787.4"/><line x1="1222.5" y1="492.4" x2="1222.5" y2="497.4"/>
<line x1="1290.5" y1="792.4" x2="1290.5" y2="787.4"/><line x1="1290.5" y1="492.4" x2="1290.5" y2="497.4"/>
<line x1="1358.5" y1="792.4" x2="1358.5" y2="787.4"/><line x1="1358.5" y1="492.4" x2="1358.5" y2="497.4"/>
<line x1="1426.5" y1="792.4" x2="1426.5" y2="787.4"/><line x1="1426.5" y1="492.4" x2="1426.5" y2="497.4"/>
<line x1="1494.5" y1="792.4" x2="1494.5" y2="787.4"/><line x1="1494.5" y1="492.4" x2="1494.5" y2="497.4"/>
<line x1="1027.5" y1="760.5" x2="1032.5" y2="760.5"/><line x1="1494.4" y1="760.5" x2="1489.4" y2="760.5"/>
<line x1="1027.5" y1="726.5" x2="1032.5" y2="726.5"/><line x1="1494.4" y1="726.5" x2="1489.4" y2="726.5"/>
<line x1="1027.5" y1="692.5" x2="1032.5" y2="692.5"/><line x1="1494.4" y1="692.5" x2="1489.4" y2="692.5"/>
<line x1="1027.5" y1="658.5" x2="1032.5" y2="658.5"/><line x1="1494.4" y1="658.5" x2="1489.4" y2="658.5"/>
<line x1="1027.5" y1="623.5" x2="1032.5" y2="623.5"/><line x1="1494.4" y1="623.5" x2="1489.4" y2="623.5"/>
<line x1="1027.5" y1="589.5" x2="1032.5" y2="589.5"/><line x1="1494.4" y1="589.5" x2="1489.4" y2="589.5"/>
<line x1="1027.5" y1="555.5" x2="1032.5" y2="555.5"/><line x1="1494.4" y1="555.5" x2="1489.4" y2="555.5"/>
<line x1="1027.5" y1="521.5" x2="1032.5" y2="521.5"/><line x1="1494.4" y1="521.5" x2="1489.4" y2="521.5"/>
</g>
<g style="font-family:'Liberation Sans',sans-serif;font-size:14px" fill="#000">
<text x="1085.4684348010776" y="809" text-anchor="middle" textLength="20.48" lengthAdjust="spacingAndGlyphs">−6</text>
<text x="1153.6236956675648" y="809" text-anchor="middle" textLength="20.48" lengthAdjust="spacingAndGlyphs">−4</text>
<text x="1221.7789565340518" y="809" text-anchor="middle" textLength="20.48" lengthAdjust="spacingAndGlyphs">−2</text>
<text x="1289.9342174005387" y="809" text-anchor="middle" textLength="8.84" lengthAdjust="spacingAndGlyphs">0</text>
<text x="1358.089478267026" y="809" text-anchor="middle" textLength="8.84" lengthAdjust="spacingAndGlyphs">2</text>
<text x="1426.2447391335131" y="809" text-anchor="middle" textLength="8.84" lengthAdjust="spacingAndGlyphs">4</text>
<text x="1494.4" y="809" text-anchor="middle" textLength="8.84" lengthAdjust="spacingAndGlyphs">6</text>
<text x="1022.0" y="764.00" text-anchor="end" textLength="8.84" lengthAdjust="spacingAndGlyphs">0</text>
<text x="1022.0" y="729.87" text-anchor="end" textLength="8.84" lengthAdjust="spacingAndGlyphs">1</text>
<text x="1022.0" y="695.74" text-anchor="end" textLength="8.84" lengthAdjust="spacingAndGlyphs">2</text>
<text x="1022.0" y="661.61" text-anchor="end" textLength="8.84" lengthAdjust="spacingAndGlyphs">3</text>
<text x="1022.0" y="627.48" text-anchor="end" textLength="8.84" lengthAdjust="spacingAndGlyphs">4</text>
<text x="1022.0" y="593.35" text-anchor="end" textLength="8.84" lengthAdjust="spacingAndGlyphs">5</text>
<text x="1022.0" y="559.22" text-anchor="end" textLength="8.84" lengthAdjust="spacingAndGlyphs">6</text>
<text x="1022.0" y="525.09" text-anchor="end" textLength="8.84" lengthAdjust="spacingAndGlyphs">7</text>
<text x="1260.95" y="829" text-anchor="middle" textLength="159.3" lengthAdjust="spacingAndGlyphs">[H,0,0] (in 1.155 A^-1)</text>
<text transform="translate(1002.5 642.4) rotate(-90)" x="0" y="0" text-anchor="middle" textLength="158" lengthAdjust="spacingAndGlyphs">[0,K,0] (in 1.155 A^-1)</text>
<text x="1260.95" y="484" text-anchor="middle" style="font-size:16.7px" textLength="177.2" lengthAdjust="spacingAndGlyphs">[0,0,L] = (-0.10,0.10)</text>
</g>
<defs><linearGradient id="cb" x1="0" y1="1" x2="0" y2="0"><stop offset="0" stop-color="#fff"/><stop offset="1" stop-color="#000"/></linearGradient></defs>
<rect x="1523.1" y="397" width="25.700000000000045" height="490.4" fill="url(#cb)" stroke="#000" stroke-width="1.2"/>
<g stroke="#000" stroke-width="1.2">
<line x1="1548.8" y1="887.40" x2="1553.8" y2="887.40"/>
<line x1="1548.8" y1="868.88" x2="1552.0" y2="868.88"/>
<line x1="1548.8" y1="850.35" x2="1552.0" y2="850.35"/>
<line x1="1548.8" y1="831.82" x2="1552.0" y2="831.82"/>
<line x1="1548.8" y1="813.30" x2="1553.8" y2="813.30"/>
<line x1="1548.8" y1="794.77" x2="1552.0" y2="794.77"/>
<line x1="1548.8" y1="776.25" x2="1552.0" y2="776.25"/>
<line x1="1548.8" y1="757.72" x2="1552.0" y2="757.72"/>
<line x1="1548.8" y1="739.20" x2="1553.8" y2="739.20"/>
<line x1="1548.8" y1="720.67" x2="1552.0" y2="720.67"/>
<line x1="1548.8" y1="702.15" x2="1552.0" y2="702.15"/>
<line x1="1548.8" y1="683.62" x2="1552.0" y2="683.62"/>
<line x1="1548.8" y1="665.10" x2="1553.8" y2="665.10"/>
<line x1="1548.8" y1="646.57" x2="1552.0" y2="646.57"/>
<line x1="1548.8" y1="628.05" x2="1552.0" y2="628.05"/>
<line x1="1548.8" y1="609.52" x2="1552.0" y2="609.52"/>
<line x1="1548.8" y1="591.00" x2="1553.8" y2="591.00"/>
<line x1="1548.8" y1="572.47" x2="1552.0" y2="572.47"/>
<line x1="1548.8" y1="553.95" x2="1552.0" y2="553.95"/>
<line x1="1548.8" y1="535.42" x2="1552.0" y2="535.42"/>
<line x1="1548.8" y1="516.90" x2="1553.8" y2="516.90"/>
<line x1="1548.8" y1="498.37" x2="1552.0" y2="498.37"/>
<line x1="1548.8" y1="479.85" x2="1552.0" y2="479.85"/>
<line x1="1548.8" y1="461.32" x2="1552.0" y2="461.32"/>
<line x1="1548.8" y1="442.80" x2="1553.8" y2="442.80"/>
<line x1="1548.8" y1="424.27" x2="1552.0" y2="424.27"/>
<line x1="1548.8" y1="405.75" x2="1552.0" y2="405.75"/>
</g>
<g style="font-family:'Liberation Sans',sans-serif;font-size:14px" fill="#000">
<text x="1557.3" y="892.40" textLength="8.84" lengthAdjust="spacingAndGlyphs">0</text>
<text x="1557.3" y="818.30" textLength="17.67" lengthAdjust="spacingAndGlyphs">20</text>
<text x="1557.3" y="744.20" textLength="17.67" lengthAdjust="spacingAndGlyphs">40</text>
<text x="1557.3" y="670.10" textLength="17.67" lengthAdjust="spacingAndGlyphs">60</text>
<text x="1557.3" y="596.00" textLength="17.67" lengthAdjust="spacingAndGlyphs">80</text>
<text x="1557.3" y="521.90" textLength="26.51" lengthAdjust="spacingAndGlyphs">100</text>
<text x="1557.3" y="447.80" textLength="26.51" lengthAdjust="spacingAndGlyphs">120</text>
</g>
</svg>
<svg style="position:absolute;left:21px;top:185px" width="889" height="469" viewBox="21 185 889 469">
<defs><filter id="bl" x="-20%" y="-20%" width="140%" height="140%"><feGaussianBlur stdDeviation="2.5"/></filter></defs>
<g filter="url(#bl)">
<path d="M344 262 L352 248 L380 245 L417 246 L419 300 L440 318 L458 333 L440 360 L425 376 L380 378 L350 372 L342 330Z" fill="#fafafa"/>
<path d="M455 332 L500 322 L535 316 L568 332 L585 378 L589 430 L584 482 L566 540 L535 578 L490 592 L440 591 L420 556 L424 500 L440 440 L455 400 L446 360Z" fill="#fbfbfb"/>
<path d="M535 318 Q575 340 586 400 Q592 470 568 535 Q540 578 490 592 Q525 560 550 515 Q572 460 566 400 Q558 350 535 318 Z" fill="#f6f6f6"/>
</g>
<g fill="#e9e9e9">
<rect x="405" y="326" width="1" height="1"/>
<rect x="551" y="411" width="1" height="1"/>
<rect x="500" y="548" width="1" height="1"/>
<rect x="472" y="503" width="1" height="1"/>
<rect x="531" y="451" width="1" height="1"/>
<rect x="416" y="255" width="1" height="1"/>
<rect x="558" y="409" width="1" height="1"/>
<rect x="521" y="552" width="1" height="1"/>
<rect x="520" y="566" width="1" height="1"/>
<rect x="440" y="524" width="1" height="1"/>
<rect x="452" y="571" width="1" height="1"/>
<rect x="374" y="320" width="1" height="1"/>
<rect x="583" y="397" width="1" height="1"/>
<rect x="498" y="349" width="1" height="1"/>
<rect x="468" y="379" width="1" height="1"/>
<rect x="487" y="560" width="1" height="1"/>
<rect x="512" y="569" width="1" height="1"/>
<rect x="568" y="443" width="1" height="1"/>
<rect x="550" y="445" width="1" height="1"/>
<rect x="412" y="266" width="1" height="1"/>
<rect x="521" y="360" width="1" height="1"/>
<rect x="566" y="376" width="1" height="1"/>
<rect x="456" y="426" width="1" height="1"/>
<rect x="502" y="452" width="1" height="1"/>
<rect x="481" y="461" width="1" height="1"/>
<rect x="577" y="421" width="1" height="1"/>
<rect x="449" y="496" width="1" height="1"/>
<rect x="400" y="349" width="1" height="1"/>
<rect x="586" y="426" width="1" height="1"/>
<rect x="445" y="447" width="1" height="1"/>
<rect x="498" y="407" width="1" height="1"/>
<rect x="511" y="367" width="1" height="1"/>
<rect x="518" y="502" width="1" height="1"/>
<rect x="346" y="265" width="1" height="1"/>
<rect x="510" y="581" width="1" height="1"/>
<rect x="489" y="356" width="1" height="1"/>
<rect x="432" y="353" width="1" height="1"/>
<rect x="416" y="376" width="1" height="1"/>
<rect x="483" y="501" width="1" height="1"/>
<rect x="418" y="322" width="1" height="1"/>
<rect x="543" y="328" width="1" height="1"/>
<rect x="421" y="361" width="1" height="1"/>
<rect x="550" y="397" width="1" height="1"/>
<rect x="563" y="402" width="1" height="1"/>
<rect x="397" y="286" width="1" height="1"/>
<rect x="543" y="537" width="1" height="1"/>
<rect x="386" y="342" width="1" height="1"/>
<rect x="543" y="469" width="1" height="1"/>
<rect x="543" y="365" width="1" height="1"/>
<rect x="373" y="346" width="1" height="1"/>
<rect x="540" y="339" width="1" height="1"/>
<rect x="449" y="577" width="1" height="1"/>
<rect x="528" y="537" width="1" height="1"/>
<rect x="507" y="426" width="1" height="1"/>
<rect x="413" y="363" width="1" height="1"/>
<rect x="397" y="268" width="1" height="1"/>
<rect x="488" y="344" width="1" height="1"/>
<rect x="568" y="487" width="1" height="1"/>
<rect x="567" y="446" width="1" height="1"/>
<rect x="383" y="349" width="1" height="1"/>
<rect x="507" y="428" width="1" height="1"/>
<rect x="444" y="573" width="1" height="1"/>
<rect x="494" y="363" width="1" height="1"/>
<rect x="460" y="518" width="1" height="1"/>
<rect x="429" y="313" width="1" height="1"/>
<rect x="475" y="530" width="1" height="1"/>
<rect x="498" y="546" width="1" height="1"/>
<rect x="353" y="339" width="1" height="1"/>
<rect x="354" y="288" width="1" height="1"/>
<rect x="371" y="268" width="1" height="1"/>
<rect x="420" y="354" width="1" height="1"/>
<rect x="488" y="370" width="1" height="1"/>
<rect x="388" y="359" width="1" height="1"/>
<rect x="520" y="377" width="1" height="1"/>
<rect x="360" y="306" width="1" height="1"/>
<rect x="537" y="377" width="1" height="1"/>
<rect x="542" y="462" width="1" height="1"/>
<rect x="465" y="490" width="1" height="1"/>
<rect x="446" y="487" width="1" height="1"/>
<rect x="475" y="487" width="1" height="1"/>
<rect x="447" y="552" width="1" height="1"/>
<rect x="576" y="375" width="1" height="1"/>
<rect x="566" y="521" width="1" height="1"/>
<rect x="507" y="555" width="1" height="1"/>
<rect x="540" y="478" width="1" height="1"/>
<rect x="525" y="441" width="1" height="1"/>
<rect x="363" y="279" width="1" height="1"/>
<rect x="510" y="537" width="1" height="1"/>
<rect x="580" y="447" width="1" height="1"/>
<rect x="533" y="423" width="1" height="1"/>
<rect x="529" y="571" width="1" height="1"/>
<rect x="355" y="357" width="1" height="1"/>
<rect x="482" y="534" width="1" height="1"/>
<rect x="401" y="307" width="1" height="1"/>
<rect x="530" y="382" width="1" height="1"/>
<rect x="585" y="388" width="1" height="1"/>
<rect x="514" y="509" width="1" height="1"/>
<rect x="510" y="425" width="1" height="1"/>
<rect x="462" y="469" width="1" height="1"/>
<rect x="571" y="425" width="1" height="1"/>
<rect x="452" y="496" width="1" height="1"/>
<rect x="387" y="338" width="1" height="1"/>
<rect x="419" y="325" width="1" height="1"/>
<rect x="514" y="578" width="1" height="1"/>
<rect x="444" y="543" width="1" height="1"/>
<rect x="487" y="338" width="1" height="1"/>
<rect x="395" y="252" width="1" height="1"/>
<rect x="461" y="378" width="1" height="1"/>
<rect x="383" y="370" width="1" height="1"/>
<rect x="461" y="454" width="1" height="1"/>
<rect x="458" y="536" width="1" height="1"/>
<rect x="547" y="439" width="1" height="1"/>
<rect x="461" y="496" width="1" height="1"/>
<rect x="556" y="384" width="1" height="1"/>
<rect x="525" y="580" width="1" height="1"/>
<rect x="510" y="580" width="1" height="1"/>
<rect x="555" y="329" width="1" height="1"/>
<rect x="388" y="335" width="1" height="1"/>
<rect x="414" y="369" width="1" height="1"/>
<rect x="486" y="480" width="1" height="1"/>
<rect x="450" y="414" width="1" height="1"/>
<rect x="581" y="381" width="1" height="1"/>
<rect x="577" y="375" width="1" height="1"/>
<rect x="535" y="509" width="1" height="1"/>
<rect x="505" y="526" width="1" height="1"/>
<rect x="582" y="479" width="1" height="1"/>
<rect x="464" y="367" width="1" height="1"/>
<rect x="521" y="481" width="1" height="1"/>
<rect x="503" y="465" width="1" height="1"/>
<rect x="491" y="438" width="1" height="1"/>
<rect x="503" y="404" width="1" height="1"/>
<rect x="419" y="306" width="1" height="1"/>
<rect x="530" y="434" width="1" height="1"/>
<rect x="526" y="370" width="1" height="1"/>
<rect x="467" y="331" width="1" height="1"/>
<rect x="534" y="368" width="1" height="1"/>
<rect x="476" y="514" width="1" height="1"/>
<rect x="429" y="540" width="1" height="1"/>
<rect x="368" y="339" width="1" height="1"/>
<rect x="365" y="283" width="1" height="1"/>
<rect x="536" y="499" width="1" height="1"/>
<rect x="387" y="310" width="1" height="1"/>
<rect x="445" y="504" width="1" height="1"/>
<rect x="546" y="506" width="1" height="1"/>
<rect x="473" y="443" width="1" height="1"/>
<rect x="391" y="332" width="1" height="1"/>
<rect x="542" y="556" width="1" height="1"/>
<rect x="579" y="378" width="1" height="1"/>
<rect x="479" y="448" width="1" height="1"/>
<rect x="500" y="586" width="1" height="1"/>
<rect x="513" y="349" width="1" height="1"/>
<rect x="557" y="413" width="1" height="1"/>
<rect x="492" y="498" width="1" height="1"/>
<rect x="507" y="416" width="1" height="1"/>
<rect x="472" y="405" width="1" height="1"/>
<rect x="503" y="399" width="1" height="1"/>
<rect x="483" y="580" width="1" height="1"/>
<rect x="540" y="462" width="1" height="1"/>
<rect x="353" y="370" width="1" height="1"/>
<rect x="399" y="271" width="1" height="1"/>
<rect x="476" y="569" width="1" height="1"/>
<rect x="421" y="549" width="1" height="1"/>
<rect x="556" y="454" width="1" height="1"/>
<rect x="574" y="495" width="1" height="1"/>
<rect x="526" y="364" width="1" height="1"/>
<rect x="557" y="397" width="1" height="1"/>
<rect x="531" y="414" width="1" height="1"/>
<rect x="367" y="259" width="1" height="1"/>
<rect x="360" y="314" width="1" height="1"/>
<rect x="516" y="432" width="1" height="1"/>
<rect x="446" y="471" width="1" height="1"/>
<rect x="531" y="385" width="1" height="1"/>
<rect x="521" y="372" width="1" height="1"/>
<rect x="393" y="304" width="1" height="1"/>
<rect x="347" y="283" width="1" height="1"/>
<rect x="355" y="252" width="1" height="1"/>
<rect x="453" y="387" width="1" height="1"/>
<rect x="395" y="277" width="1" height="1"/>
<rect x="497" y="365" width="1" height="1"/>
<rect x="371" y="262" width="1" height="1"/>
<rect x="523" y="340" width="1" height="1"/>
<rect x="539" y="407" width="1" height="1"/>
<rect x="403" y="337" width="1" height="1"/>
<rect x="545" y="464" width="1" height="1"/>
<rect x="512" y="583" width="1" height="1"/>
<rect x="348" y="276" width="1" height="1"/>
<rect x="383" y="257" width="1" height="1"/>
<rect x="585" y="411" width="1" height="1"/>
<rect x="543" y="565" width="1" height="1"/>
<rect x="526" y="501" width="1" height="1"/>
<rect x="551" y="438" width="1" height="1"/>
<rect x="573" y="371" width="1" height="1"/>
<rect x="445" y="324" width="1" height="1"/>
<rect x="536" y="412" width="1" height="1"/>
<rect x="408" y="303" width="1" height="1"/>
<rect x="522" y="456" width="1" height="1"/>
<rect x="519" y="379" width="1" height="1"/>
<rect x="458" y="509" width="1" height="1"/>
<rect x="502" y="551" width="1" height="1"/>
<rect x="560" y="401" width="1" height="1"/>
<rect x="566" y="501" width="1" height="1"/>
<rect x="424" y="374" width="1" height="1"/>
<rect x="401" y="261" width="1" height="1"/>
<rect x="446" y="517" width="1" height="1"/>
<rect x="492" y="520" width="1" height="1"/>
<rect x="385" y="272" width="1" height="1"/>
<rect x="495" y="469" width="1" height="1"/>
<rect x="532" y="549" width="1" height="1"/>
<rect x="551" y="452" width="1" height="1"/>
<rect x="476" y="406" width="1" height="1"/>
<rect x="525" y="392" width="1" height="1"/>
<rect x="503" y="456" width="1" height="1"/>
<rect x="394" y="367" width="1" height="1"/>
<rect x="395" y="302" width="1" height="1"/>
<rect x="575" y="498" width="1" height="1"/>
<rect x="494" y="570" width="1" height="1"/>
<rect x="475" y="391" width="1" height="1"/>
<rect x="579" y="413" width="1" height="1"/>
<rect x="535" y="386" width="1" height="1"/>
<rect x="387" y="278" width="1" height="1"/>
<rect x="522" y="347" width="1" height="1"/>
<rect x="471" y="468" width="1" height="1"/>
<rect x="427" y="504" width="1" height="1"/>
<rect x="528" y="345" width="1" height="1"/>
<rect x="366" y="349" width="1" height="1"/>
<rect x="473" y="434" width="1" height="1"/>
<rect x="431" y="542" width="1" height="1"/>
<rect x="563" y="526" width="1" height="1"/>
<rect x="415" y="329" width="1" height="1"/>
<rect x="353" y="315" width="1" height="1"/>
<rect x="534" y="407" width="1" height="1"/>
<rect x="387" y="249" width="1" height="1"/>
<rect x="449" y="362" width="1" height="1"/>
<rect x="364" y="353" width="1" height="1"/>
<rect x="445" y="335" width="1" height="1"/>
<rect x="498" y="480" width="1" height="1"/>
<rect x="570" y="527" width="1" height="1"/>
<rect x="402" y="291" width="1" height="1"/>
<rect x="531" y="520" width="1" height="1"/>
<rect x="468" y="535" width="1" height="1"/>
<rect x="479" y="342" width="1" height="1"/>
<rect x="383" y="250" width="1" height="1"/>
<rect x="502" y="558" width="1" height="1"/>
<rect x="568" y="408" width="1" height="1"/>
<rect x="508" y="569" width="1" height="1"/>
<rect x="545" y="455" width="1" height="1"/>
<rect x="383" y="308" width="1" height="1"/>
<rect x="478" y="387" width="1" height="1"/>
<rect x="542" y="402" width="1" height="1"/>
<rect x="444" y="542" width="1" height="1"/>
<rect x="485" y="436" width="1" height="1"/>
<rect x="463" y="342" width="1" height="1"/>
<rect x="519" y="563" width="1" height="1"/>
<rect x="437" y="534" width="1" height="1"/>
<rect x="420" y="339" width="1" height="1"/>
<rect x="411" y="290" width="1" height="1"/>
<rect x="360" y="324" width="1" height="1"/>
<rect x="390" y="272" width="1" height="1"/>
<rect x="473" y="504" width="1" height="1"/>
<rect x="551" y="465" width="1" height="1"/>
<rect x="357" y="338" width="1" height="1"/>
<rect x="462" y="338" width="1" height="1"/>
<rect x="510" y="470" width="1" height="1"/>
<rect x="376" y="263" width="1" height="1"/>
<rect x="582" y="431" width="1" height="1"/>
<rect x="411" y="290" width="1" height="1"/>
<rect x="377" y="288" width="1" height="1"/>
<rect x="429" y="564" width="1" height="1"/>
<rect x="359" y="311" width="1" height="1"/>
<rect x="462" y="490" width="1" height="1"/>
<rect x="427" y="506" width="1" height="1"/>
<rect x="537" y="443" width="1" height="1"/>
<rect x="457" y="432" width="1" height="1"/>
<rect x="451" y="431" width="1" height="1"/>
<rect x="490" y="570" width="1" height="1"/>
<rect x="382" y="337" width="1" height="1"/>
<rect x="391" y="263" width="1" height="1"/>
<rect x="513" y="428" width="1" height="1"/>
<rect x="476" y="398" width="1" height="1"/>
<rect x="434" y="355" width="1" height="1"/>
<rect x="557" y="536" width="1" height="1"/>
<rect x="408" y="287" width="1" height="1"/>
<rect x="466" y="500" width="1" height="1"/>
<rect x="454" y="411" width="1" height="1"/>
<rect x="474" y="550" width="1" height="1"/>
<rect x="589" y="429" width="1" height="1"/>
<rect x="451" y="460" width="1" height="1"/>
<rect x="554" y="516" width="1" height="1"/>
<rect x="432" y="319" width="1" height="1"/>
<rect x="478" y="553" width="1" height="1"/>
<rect x="449" y="548" width="1" height="1"/>
<rect x="519" y="371" width="1" height="1"/>
<rect x="504" y="550" width="1" height="1"/>
<rect x="395" y="374" width="1" height="1"/>
<rect x="361" y="356" width="1" height="1"/>
<rect x="411" y="254" width="1" height="1"/>
<rect x="476" y="566" width="1" height="1"/>
<rect x="475" y="502" width="1" height="1"/>
<rect x="549" y="537" width="1" height="1"/>
<rect x="570" y="398" width="1" height="1"/>
<rect x="562" y="376" width="1" height="1"/>
<rect x="460" y="556" width="1" height="1"/>
<rect x="412" y="310" width="1" height="1"/>
<rect x="548" y="454" width="1" height="1"/>
<rect x="361" y="254" width="1" height="1"/>
<rect x="469" y="395" width="1" height="1"/>
<rect x="498" y="475" width="1" height="1"/>
<rect x="461" y="392" width="1" height="1"/>
<rect x="565" y="533" width="1" height="1"/>
<rect x="487" y="553" width="1" height="1"/>
<rect x="472" y="445" width="1" height="1"/>
<rect x="361" y="325" width="1" height="1"/>
<rect x="458" y="544" width="1" height="1"/>
<rect x="476" y="344" width="1" height="1"/>
<rect x="496" y="368" width="1" height="1"/>
<rect x="534" y="562" width="1" height="1"/>
<rect x="556" y="502" width="1" height="1"/>
<rect x="391" y="265" width="1" height="1"/>
<rect x="449" y="353" width="1" height="1"/>
<rect x="570" y="383" width="1" height="1"/>
<rect x="393" y="309" width="1" height="1"/>
<rect x="437" y="542" width="1" height="1"/>
<rect x="385" y="332" width="1" height="1"/>
<rect x="482" y="330" width="1" height="1"/>
<rect x="516" y="319" width="1" height="1"/>
<rect x="509" y="457" width="1" height="1"/>
<rect x="491" y="464" width="1" height="1"/>
<rect x="538" y="545" width="1" height="1"/>
<rect x="464" y="447" width="1" height="1"/>
<rect x="513" y="322" width="1" height="1"/>
<rect x="521" y="363" width="1" height="1"/>
<rect x="525" y="448" width="1" height="1"/>
<rect x="554" y="411" width="1" height="1"/>
<rect x="476" y="546" width="1" height="1"/>
<rect x="453" y="416" width="1" height="1"/>
<rect x="487" y="532" width="1" height="1"/>
<rect x="391" y="277" width="1" height="1"/>
<rect x="532" y="437" width="1" height="1"/>
<rect x="563" y="434" width="1" height="1"/>
<rect x="529" y="346" width="1" height="1"/>
<rect x="525" y="367" width="1" height="1"/>
<rect x="461" y="443" width="1" height="1"/>
<rect x="482" y="379" width="1" height="1"/>
<rect x="382" y="279" width="1" height="1"/>
<rect x="475" y="567" width="1" height="1"/>
<rect x="559" y="424" width="1" height="1"/>
<rect x="410" y="354" width="1" height="1"/>
<rect x="579" y="411" width="1" height="1"/>
<rect x="449" y="336" width="1" height="1"/>
<rect x="484" y="423" width="1" height="1"/>
<rect x="390" y="322" width="1" height="1"/>
<rect x="525" y="560" width="1" height="1"/>
<rect x="529" y="323" width="1" height="1"/>
<rect x="455" y="585" width="1" height="1"/>
<rect x="434" y="549" width="1" height="1"/>
<rect x="528" y="420" width="1" height="1"/>
<rect x="513" y="394" width="1" height="1"/>
<rect x="543" y="334" width="1" height="1"/>
<rect x="477" y="449" width="1" height="1"/>
<rect x="467" y="578" width="1" height="1"/>
<rect x="554" y="499" width="1" height="1"/>
<rect x="480" y="505" width="1" height="1"/>
<rect x="526" y="414" width="1" height="1"/>
<rect x="477" y="478" width="1" height="1"/>
<rect x="538" y="381" width="1" height="1"/>
<rect x="494" y="336" width="1" height="1"/>
<rect x="383" y="255" width="1" height="1"/>
<rect x="471" y="359" width="1" height="1"/>
<rect x="542" y="380" width="1" height="1"/>
<rect x="543" y="400" width="1" height="1"/>
<rect x="508" y="358" width="1" height="1"/>
<rect x="542" y="365" width="1" height="1"/>
<rect x="364" y="355" width="1" height="1"/>
<rect x="484" y="435" width="1" height="1"/>
<rect x="491" y="346" width="1" height="1"/>
<rect x="425" y="313" width="1" height="1"/>
<rect x="483" y="337" width="1" height="1"/>
<rect x="532" y="454" width="1" height="1"/>
<rect x="507" y="501" width="1" height="1"/>
<rect x="471" y="393" width="1" height="1"/>
<rect x="418" y="266" width="1" height="1"/>
<rect x="540" y="419" width="1" height="1"/>
<rect x="487" y="462" width="1" height="1"/>
<rect x="573" y="389" width="1" height="1"/>
<rect x="416" y="351" width="1" height="1"/>
<rect x="388" y="273" width="1" height="1"/>
<rect x="528" y="430" width="1" height="1"/>
<rect x="534" y="422" width="1" height="1"/>
<rect x="510" y="423" width="1" height="1"/>
<rect x="573" y="392" width="1" height="1"/>
<rect x="519" y="440" width="1" height="1"/>
<rect x="405" y="369" width="1" height="1"/>
<rect x="504" y="504" width="1" height="1"/>
<rect x="581" y="411" width="1" height="1"/>
<rect x="391" y="362" width="1" height="1"/>
<rect x="355" y="328" width="1" height="1"/>
<rect x="487" y="458" width="1" height="1"/>
<rect x="401" y="308" width="1" height="1"/>
<rect x="365" y="307" width="1" height="1"/>
<rect x="466" y="333" width="1" height="1"/>
<rect x="563" y="442" width="1" height="1"/>
<rect x="529" y="371" width="1" height="1"/>
<rect x="523" y="339" width="1" height="1"/>
<rect x="395" y="324" width="1" height="1"/>
<rect x="502" y="499" width="1" height="1"/>
<rect x="461" y="376" width="1" height="1"/>
<rect x="467" y="395" width="1" height="1"/>
<rect x="503" y="494" width="1" height="1"/>
<rect x="565" y="524" width="1" height="1"/>
<rect x="490" y="575" width="1" height="1"/>
<rect x="568" y="396" width="1" height="1"/>
<rect x="377" y="319" width="1" height="1"/>
<rect x="549" y="392" width="1" height="1"/>
<rect x="401" y="322" width="1" height="1"/>
<rect x="567" y="361" width="1" height="1"/>
<rect x="416" y="320" width="1" height="1"/>
<rect x="477" y="440" width="1" height="1"/>
<rect x="575" y="508" width="1" height="1"/>
<rect x="403" y="315" width="1" height="1"/>
<rect x="568" y="337" width="1" height="1"/>
<rect x="505" y="452" width="1" height="1"/>
<rect x="403" y="287" width="1" height="1"/>
<rect x="560" y="364" width="1" height="1"/>
<rect x="383" y="359" width="1" height="1"/>
<rect x="369" y="355" width="1" height="1"/>
<rect x="477" y="386" width="1" height="1"/>
<rect x="424" y="346" width="1" height="1"/>
<rect x="463" y="517" width="1" height="1"/>
<rect x="450" y="513" width="1" height="1"/>
<rect x="461" y="378" width="1" height="1"/>
<rect x="470" y="540" width="1" height="1"/>
<rect x="477" y="412" width="1" height="1"/>
<rect x="465" y="402" width="1" height="1"/>
<rect x="459" y="494" width="1" height="1"/>
<rect x="406" y="271" width="1" height="1"/>
<rect x="476" y="538" width="1" height="1"/>
<rect x="553" y="551" width="1" height="1"/>
<rect x="530" y="402" width="1" height="1"/>
<rect x="528" y="523" width="1" height="1"/>
<rect x="561" y="436" width="1" height="1"/>
<rect x="363" y="274" width="1" height="1"/>
<rect x="549" y="342" width="1" height="1"/>
<rect x="518" y="504" width="1" height="1"/>
<rect x="496" y="512" width="1" height="1"/>
<rect x="553" y="400" width="1" height="1"/>
<rect x="472" y="478" width="1" height="1"/>
<rect x="542" y="545" width="1" height="1"/>
<rect x="411" y="326" width="1" height="1"/>
<rect x="471" y="488" width="1" height="1"/>
<rect x="420" y="362" width="1" height="1"/>
<rect x="533" y="516" width="1" height="1"/>
<rect x="415" y="270" width="1" height="1"/>
<rect x="574" y="499" width="1" height="1"/>
<rect x="490" y="386" width="1" height="1"/>
<rect x="582" y="395" width="1" height="1"/>
<rect x="395" y="279" width="1" height="1"/>
<rect x="432" y="575" width="1" height="1"/>
<rect x="504" y="404" width="1" height="1"/>
<rect x="506" y="455" width="1" height="1"/>
<rect x="496" y="417" width="1" height="1"/>
<rect x="472" y="416" width="1" height="1"/>
<rect x="538" y="348" width="1" height="1"/>
<rect x="462" y="399" width="1" height="1"/>
<rect x="406" y="291" width="1" height="1"/>
<rect x="481" y="446" width="1" height="1"/>
<rect x="455" y="442" width="1" height="1"/>
<rect x="545" y="479" width="1" height="1"/>
<rect x="539" y="356" width="1" height="1"/>
<rect x="487" y="418" width="1" height="1"/>
<rect x="557" y="426" width="1" height="1"/>
<rect x="479" y="371" width="1" height="1"/>
<rect x="475" y="366" width="1" height="1"/>
<rect x="380" y="277" width="1" height="1"/>
<rect x="555" y="447" width="1" height="1"/>
<rect x="529" y="324" width="1" height="1"/>
<rect x="412" y="331" width="1" height="1"/>
<rect x="557" y="531" width="1" height="1"/>
<rect x="448" y="490" width="1" height="1"/>
<rect x="516" y="460" width="1" height="1"/>
<rect x="417" y="287" width="1" height="1"/>
<rect x="440" y="551" width="1" height="1"/>
<rect x="531" y="484" width="1" height="1"/>
<rect x="407" y="373" width="1" height="1"/>
<rect x="448" y="479" width="1" height="1"/>
<rect x="562" y="503" width="1" height="1"/>
<rect x="574" y="488" width="1" height="1"/>
<rect x="529" y="529" width="1" height="1"/>
<rect x="495" y="324" width="1" height="1"/>
<rect x="503" y="414" width="1" height="1"/>
<rect x="459" y="581" width="1" height="1"/>
<rect x="563" y="449" width="1" height="1"/>
<rect x="531" y="381" width="1" height="1"/>
<rect x="485" y="533" width="1" height="1"/>
<rect x="430" y="350" width="1" height="1"/>
<rect x="568" y="476" width="1" height="1"/>
<rect x="450" y="469" width="1" height="1"/>
<rect x="470" y="344" width="1" height="1"/>
<rect x="531" y="341" width="1" height="1"/>
<rect x="547" y="472" width="1" height="1"/>
<rect x="472" y="375" width="1" height="1"/>
<rect x="488" y="401" width="1" height="1"/>
<rect x="503" y="507" width="1" height="1"/>
<rect x="484" y="575" width="1" height="1"/>
<rect x="506" y="447" width="1" height="1"/>
<rect x="540" y="462" width="1" height="1"/>
<rect x="487" y="353" width="1" height="1"/>
<rect x="472" y="334" width="1" height="1"/>
<rect x="459" y="508" width="1" height="1"/>
<rect x="533" y="510" width="1" height="1"/>
<rect x="446" y="554" width="1" height="1"/>
<rect x="497" y="354" width="1" height="1"/>
<rect x="545" y="368" width="1" height="1"/>
<rect x="566" y="384" width="1" height="1"/>
<rect x="358" y="333" width="1" height="1"/>
<rect x="477" y="545" width="1" height="1"/>
<rect x="489" y="366" width="1" height="1"/>
<rect x="531" y="533" width="1" height="1"/>
<rect x="486" y="463" width="1" height="1"/>
<rect x="391" y="303" width="1" height="1"/>
<rect x="586" y="403" width="1" height="1"/>
<rect x="566" y="531" width="1" height="1"/>
<rect x="481" y="350" width="1" height="1"/>
<rect x="428" y="554" width="1" height="1"/>
<rect x="497" y="532" width="1" height="1"/>
<rect x="347" y="283" width="1" height="1"/>
<rect x="537" y="551" width="1" height="1"/>
<rect x="556" y="537" width="1" height="1"/>
<rect x="480" y="550" width="1" height="1"/>
<rect x="516" y="439" width="1" height="1"/>
<rect x="363" y="331" width="1" height="1"/>
<rect x="585" y="446" width="1" height="1"/>
<rect x="527" y="556" width="1" height="1"/>
<rect x="564" y="523" width="1" height="1"/>
<rect x="443" y="455" width="1" height="1"/>
<rect x="369" y="326" width="1" height="1"/>
<rect x="446" y="505" width="1" height="1"/>
<rect x="458" y="489" width="1" height="1"/>
<rect x="357" y="335" width="1" height="1"/>
<rect x="347" y="342" width="1" height="1"/>
<rect x="499" y="543" width="1" height="1"/>
<rect x="547" y="494" width="1" height="1"/>
<rect x="437" y="332" width="1" height="1"/>
<rect x="478" y="464" width="1" height="1"/>
<rect x="379" y="334" width="1" height="1"/>
<rect x="509" y="582" width="1" height="1"/>
<rect x="438" y="581" width="1" height="1"/>
<rect x="495" y="575" width="1" height="1"/>
<rect x="473" y="507" width="1" height="1"/>
<rect x="471" y="447" width="1" height="1"/>
<rect x="457" y="475" width="1" height="1"/>
<rect x="569" y="522" width="1" height="1"/>
<rect x="517" y="464" width="1" height="1"/>
<rect x="434" y="491" width="1" height="1"/>
<rect x="489" y="383" width="1" height="1"/>
<rect x="451" y="441" width="1" height="1"/>
<rect x="588" y="431" width="1" height="1"/>
<rect x="539" y="350" width="1" height="1"/>
<rect x="519" y="456" width="1" height="1"/>
<rect x="527" y="552" width="1" height="1"/>
<rect x="494" y="335" width="1" height="1"/>
<rect x="519" y="547" width="1" height="1"/>
<rect x="381" y="282" width="1" height="1"/>
<rect x="519" y="348" width="1" height="1"/>
<rect x="526" y="448" width="1" height="1"/>
<rect x="387" y="259" width="1" height="1"/>
<rect x="461" y="426" width="1" height="1"/>
<rect x="494" y="375" width="1" height="1"/>
<rect x="379" y="246" width="1" height="1"/>
<rect x="582" y="388" width="1" height="1"/>
<rect x="366" y="306" width="1" height="1"/>
<rect x="434" y="481" width="1" height="1"/>
<rect x="498" y="463" width="1" height="1"/>
<rect x="504" y="449" width="1" height="1"/>
<rect x="464" y="507" width="1" height="1"/>
<rect x="554" y="350" width="1" height="1"/>
<rect x="364" y="270" width="1" height="1"/>
<rect x="402" y="357" width="1" height="1"/>
<rect x="452" y="437" width="1" height="1"/>
<rect x="444" y="575" width="1" height="1"/>
<rect x="557" y="329" width="1" height="1"/>
<rect x="547" y="375" width="1" height="1"/>
<rect x="560" y="399" width="1" height="1"/>
<rect x="497" y="426" width="1" height="1"/>
<rect x="467" y="383" width="1" height="1"/>
<rect x="566" y="441" width="1" height="1"/>
<rect x="391" y="304" width="1" height="1"/>
<rect x="498" y="535" width="1" height="1"/>
<rect x="540" y="509" width="1" height="1"/>
<rect x="539" y="570" width="1" height="1"/>
<rect x="567" y="360" width="1" height="1"/>
<rect x="556" y="544" width="1" height="1"/>
<rect x="513" y="447" width="1" height="1"/>
<rect x="462" y="442" width="1" height="1"/>
<rect x="417" y="313" width="1" height="1"/>
<rect x="570" y="372" width="1" height="1"/>
<rect x="469" y="481" width="1" height="1"/>
<rect x="424" y="536" width="1" height="1"/>
<rect x="372" y="296" width="1" height="1"/>
<rect x="472" y="372" width="1" height="1"/>
<rect x="418" y="357" width="1" height="1"/>
<rect x="445" y="543" width="1" height="1"/>
<rect x="484" y="333" width="1" height="1"/>
<rect x="375" y="250" width="1" height="1"/>
<rect x="451" y="545" width="1" height="1"/>
<rect x="411" y="344" width="1" height="1"/>
<rect x="555" y="403" width="1" height="1"/>
<rect x="400" y="376" width="1" height="1"/>
<rect x="467" y="340" width="1" height="1"/>
<rect x="506" y="333" width="1" height="1"/>
<rect x="568" y="367" width="1" height="1"/>
<rect x="396" y="271" width="1" height="1"/>
<rect x="372" y="319" width="1" height="1"/>
<rect x="562" y="390" width="1" height="1"/>
<rect x="452" y="580" width="1" height="1"/>
<rect x="401" y="359" width="1" height="1"/>
<rect x="467" y="334" width="1" height="1"/>
<rect x="427" y="318" width="1" height="1"/>
<rect x="492" y="400" width="1" height="1"/>
<rect x="459" y="459" width="1" height="1"/>
<rect x="553" y="406" width="1" height="1"/>
<rect x="531" y="367" width="1" height="1"/>
<rect x="451" y="375" width="1" height="1"/>
<rect x="473" y="346" width="1" height="1"/>
<rect x="548" y="401" width="1" height="1"/>
<rect x="361" y="342" width="1" height="1"/>
<rect x="400" y="315" width="1" height="1"/>
<rect x="434" y="467" width="1" height="1"/>
<rect x="447" y="475" width="1" height="1"/>
<rect x="548" y="383" width="1" height="1"/>
<rect x="492" y="339" width="1" height="1"/>
<rect x="455" y="466" width="1" height="1"/>
<rect x="428" y="311" width="1" height="1"/>
<rect x="421" y="320" width="1" height="1"/>
<rect x="467" y="454" width="1" height="1"/>
<rect x="515" y="365" width="1" height="1"/>
<rect x="569" y="519" width="1" height="1"/>
<rect x="500" y="586" width="1" height="1"/>
<rect x="480" y="481" width="1" height="1"/>
<rect x="504" y="545" width="1" height="1"/>
<rect x="556" y="350" width="1" height="1"/>
<rect x="489" y="368" width="1" height="1"/>
<rect x="557" y="541" width="1" height="1"/>
<rect x="513" y="431" width="1" height="1"/>
<rect x="568" y="463" width="1" height="1"/>
<rect x="410" y="311" width="1" height="1"/>
<rect x="491" y="406" width="1" height="1"/>
<rect x="561" y="394" width="1" height="1"/>
<rect x="451" y="502" width="1" height="1"/>
<rect x="493" y="400" width="1" height="1"/>
<rect x="348" y="334" width="1" height="1"/>
<rect x="488" y="495" width="1" height="1"/>
<rect x="531" y="574" width="1" height="1"/>
<rect x="400" y="311" width="1" height="1"/>
<rect x="537" y="348" width="1" height="1"/>
<rect x="538" y="422" width="1" height="1"/>
<rect x="504" y="489" width="1" height="1"/>
<rect x="413" y="260" width="1" height="1"/>
<rect x="363" y="335" width="1" height="1"/>
<rect x="566" y="506" width="1" height="1"/>
<rect x="519" y="511" width="1" height="1"/>
<rect x="571" y="394" width="1" height="1"/>
<rect x="348" y="353" width="1" height="1"/>
<rect x="489" y="340" width="1" height="1"/>
<rect x="403" y="277" width="1" height="1"/>
<rect x="489" y="574" width="1" height="1"/>
<rect x="358" y="333" width="1" height="1"/>
<rect x="499" y="474" width="1" height="1"/>
<rect x="568" y="360" width="1" height="1"/>
<rect x="498" y="385" width="1" height="1"/>
<rect x="528" y="350" width="1" height="1"/>
<rect x="410" y="331" width="1" height="1"/>
<rect x="523" y="404" width="1" height="1"/>
<rect x="379" y="368" width="1" height="1"/>
<rect x="483" y="374" width="1" height="1"/>
<rect x="489" y="539" width="1" height="1"/>
<rect x="501" y="524" width="1" height="1"/>
<rect x="577" y="429" width="1" height="1"/>
<rect x="346" y="274" width="1" height="1"/>
<rect x="531" y="548" width="1" height="1"/>
<rect x="523" y="422" width="1" height="1"/>
<rect x="554" y="472" width="1" height="1"/>
<rect x="428" y="327" width="1" height="1"/>
<rect x="525" y="569" width="1" height="1"/>
<rect x="561" y="384" width="1" height="1"/>
<rect x="528" y="528" width="1" height="1"/>
<rect x="435" y="508" width="1" height="1"/>
<rect x="356" y="356" width="1" height="1"/>
<rect x="479" y="366" width="1" height="1"/>
<rect x="555" y="397" width="1" height="1"/>
<rect x="469" y="477" width="1" height="1"/>
<rect x="477" y="418" width="1" height="1"/>
<rect x="496" y="347" width="1" height="1"/>
<rect x="409" y="319" width="1" height="1"/>
<rect x="543" y="449" width="1" height="1"/>
<rect x="477" y="518" width="1" height="1"/>
<rect x="547" y="536" width="1" height="1"/>
<rect x="580" y="445" width="1" height="1"/>
<rect x="504" y="393" width="1" height="1"/>
<rect x="571" y="469" width="1" height="1"/>
<rect x="472" y="493" width="1" height="1"/>
<rect x="358" y="308" width="1" height="1"/>
<rect x="524" y="358" width="1" height="1"/>
<rect x="518" y="534" width="1" height="1"/>
<rect x="513" y="523" width="1" height="1"/>
<rect x="517" y="546" width="1" height="1"/>
<rect x="546" y="459" width="1" height="1"/>
<rect x="558" y="435" width="1" height="1"/>
<rect x="367" y="344" width="1" height="1"/>
<rect x="575" y="362" width="1" height="1"/>
<rect x="459" y="550" width="1" height="1"/>
<rect x="513" y="521" width="1" height="1"/>
<rect x="458" y="422" width="1" height="1"/>
<rect x="359" y="314" width="1" height="1"/>
<rect x="577" y="371" width="1" height="1"/>
<rect x="549" y="399" width="1" height="1"/>
<rect x="422" y="538" width="1" height="1"/>
<rect x="455" y="577" width="1" height="1"/>
<rect x="555" y="373" width="1" height="1"/>
<rect x="372" y="338" width="1" height="1"/>
<rect x="565" y="337" width="1" height="1"/>
<rect x="514" y="487" width="1" height="1"/>
<rect x="498" y="338" width="1" height="1"/>
<rect x="474" y="464" width="1" height="1"/>
<rect x="490" y="415" width="1" height="1"/>
<rect x="468" y="409" width="1" height="1"/>
<rect x="454" y="375" width="1" height="1"/>
<rect x="434" y="576" width="1" height="1"/>
<rect x="361" y="275" width="1" height="1"/>
<rect x="467" y="396" width="1" height="1"/>
<rect x="570" y="443" width="1" height="1"/>
<rect x="418" y="307" width="1" height="1"/>
<rect x="417" y="296" width="1" height="1"/>
<rect x="554" y="529" width="1" height="1"/>
<rect x="477" y="520" width="1" height="1"/>
<rect x="478" y="538" width="1" height="1"/>
<rect x="442" y="553" width="1" height="1"/>
<rect x="373" y="339" width="1" height="1"/>
<rect x="454" y="449" width="1" height="1"/>
<rect x="438" y="509" width="1" height="1"/>
<rect x="553" y="342" width="1" height="1"/>
<rect x="532" y="508" width="1" height="1"/>
<rect x="490" y="451" width="1" height="1"/>
<rect x="483" y="503" width="1" height="1"/>
<rect x="514" y="339" width="1" height="1"/>
<rect x="504" y="493" width="1" height="1"/>
<rect x="457" y="558" width="1" height="1"/>
<rect x="483" y="455" width="1" height="1"/>
<rect x="454" y="487" width="1" height="1"/>
<rect x="459" y="421" width="1" height="1"/>
<rect x="398" y="341" width="1" height="1"/>
<rect x="417" y="326" width="1" height="1"/>
<rect x="413" y="345" width="1" height="1"/>
<rect x="474" y="370" width="1" height="1"/>
<rect x="531" y="570" width="1" height="1"/>
<rect x="575" y="375" width="1" height="1"/>
<rect x="512" y="500" width="1" height="1"/>
<rect x="523" y="384" width="1" height="1"/>
<rect x="505" y="367" width="1" height="1"/>
<rect x="537" y="558" width="1" height="1"/>
<rect x="514" y="518" width="1" height="1"/>
<rect x="388" y="320" width="1" height="1"/>
<rect x="347" y="342" width="1" height="1"/>
<rect x="554" y="449" width="1" height="1"/>
<rect x="566" y="471" width="1" height="1"/>
<rect x="424" y="305" width="1" height="1"/>
<rect x="451" y="374" width="1" height="1"/>
<rect x="500" y="334" width="1" height="1"/>
<rect x="519" y="477" width="1" height="1"/>
<rect x="502" y="558" width="1" height="1"/>
<rect x="531" y="399" width="1" height="1"/>
<rect x="528" y="477" width="1" height="1"/>
<rect x="435" y="495" width="1" height="1"/>
<rect x="529" y="350" width="1" height="1"/>
<rect x="491" y="401" width="1" height="1"/>
<rect x="533" y="545" width="1" height="1"/>
<rect x="413" y="295" width="1" height="1"/>
<rect x="569" y="509" width="1" height="1"/>
<rect x="431" y="515" width="1" height="1"/>
<rect x="430" y="359" width="1" height="1"/>
<rect x="447" y="489" width="1" height="1"/>
<rect x="483" y="522" width="1" height="1"/>
<rect x="458" y="391" width="1" height="1"/>
<rect x="480" y="405" width="1" height="1"/>
<rect x="385" y="257" width="1" height="1"/>
<rect x="444" y="541" width="1" height="1"/>
<rect x="491" y="467" width="1" height="1"/>
<rect x="414" y="322" width="1" height="1"/>
<rect x="438" y="497" width="1" height="1"/>
<rect x="404" y="296" width="1" height="1"/>
<rect x="567" y="459" width="1" height="1"/>
<rect x="564" y="430" width="1" height="1"/>
<rect x="463" y="334" width="1" height="1"/>
<rect x="395" y="272" width="1" height="1"/>
<rect x="575" y="432" width="1" height="1"/>
<rect x="486" y="566" width="1" height="1"/>
<rect x="524" y="335" width="1" height="1"/>
<rect x="511" y="323" width="1" height="1"/>
<rect x="486" y="451" width="1" height="1"/>
<rect x="540" y="403" width="1" height="1"/>
<rect x="523" y="326" width="1" height="1"/>
<rect x="402" y="351" width="1" height="1"/>
<rect x="376" y="343" width="1" height="1"/>
<rect x="481" y="576" width="1" height="1"/>
<rect x="522" y="578" width="1" height="1"/>
<rect x="465" y="497" width="1" height="1"/>
<rect x="546" y="396" width="1" height="1"/>
<rect x="542" y="487" width="1" height="1"/>
<rect x="434" y="481" width="1" height="1"/>
<rect x="451" y="456" width="1" height="1"/>
<rect x="506" y="386" width="1" height="1"/>
<rect x="352" y="307" width="1" height="1"/>
<rect x="441" y="566" width="1" height="1"/>
<rect x="459" y="547" width="1" height="1"/>
<rect x="387" y="333" width="1" height="1"/>
<rect x="400" y="345" width="1" height="1"/>
<rect x="540" y="373" width="1" height="1"/>
<rect x="453" y="552" width="1" height="1"/>
<rect x="515" y="535" width="1" height="1"/>
<rect x="454" y="590" width="1" height="1"/>
<rect x="578" y="443" width="1" height="1"/>
<rect x="556" y="457" width="1" height="1"/>
<rect x="459" y="492" width="1" height="1"/>
<rect x="408" y="337" width="1" height="1"/>
<rect x="469" y="418" width="1" height="1"/>
<rect x="434" y="492" width="1" height="1"/>
<rect x="401" y="312" width="1" height="1"/>
<rect x="533" y="324" width="1" height="1"/>
<rect x="385" y="251" width="1" height="1"/>
<rect x="464" y="425" width="1" height="1"/>
<rect x="537" y="478" width="1" height="1"/>
<rect x="399" y="305" width="1" height="1"/>
<rect x="488" y="473" width="1" height="1"/>
<rect x="420" y="334" width="1" height="1"/>
<rect x="520" y="356" width="1" height="1"/>
<rect x="584" y="399" width="1" height="1"/>
<rect x="500" y="588" width="1" height="1"/>
<rect x="373" y="317" width="1" height="1"/>
<rect x="477" y="411" width="1" height="1"/>
<rect x="450" y="498" width="1" height="1"/>
<rect x="445" y="547" width="1" height="1"/>
<rect x="553" y="548" width="1" height="1"/>
<rect x="446" y="538" width="1" height="1"/>
<rect x="424" y="371" width="1" height="1"/>
<rect x="439" y="513" width="1" height="1"/>
<rect x="510" y="337" width="1" height="1"/>
<rect x="389" y="248" width="1" height="1"/>
<rect x="446" y="324" width="1" height="1"/>
<rect x="527" y="388" width="1" height="1"/>
<rect x="406" y="279" width="1" height="1"/>
<rect x="530" y="561" width="1" height="1"/>
<rect x="564" y="426" width="1" height="1"/>
<rect x="528" y="376" width="1" height="1"/>
<rect x="515" y="431" width="1" height="1"/>
<rect x="349" y="338" width="1" height="1"/>
<rect x="453" y="545" width="1" height="1"/>
<rect x="519" y="340" width="1" height="1"/>
<rect x="452" y="540" width="1" height="1"/>
<rect x="462" y="421" width="1" height="1"/>
<rect x="456" y="426" width="1" height="1"/>
<rect x="483" y="486" width="1" height="1"/>
<rect x="481" y="388" width="1" height="1"/>
<rect x="433" y="339" width="1" height="1"/>
<rect x="579" y="372" width="1" height="1"/>
<rect x="481" y="531" width="1" height="1"/>
<rect x="416" y="262" width="1" height="1"/>
<rect x="401" y="344" width="1" height="1"/>
<rect x="567" y="424" width="1" height="1"/>
<rect x="525" y="341" width="1" height="1"/>
<rect x="508" y="563" width="1" height="1"/>
<rect x="577" y="406" width="1" height="1"/>
<rect x="575" y="382" width="1" height="1"/>
<rect x="450" y="568" width="1" height="1"/>
<rect x="545" y="358" width="1" height="1"/>
<rect x="568" y="372" width="1" height="1"/>
<rect x="548" y="561" width="1" height="1"/>
<rect x="482" y="332" width="1" height="1"/>
<rect x="473" y="336" width="1" height="1"/>
<rect x="533" y="329" width="1" height="1"/>
<rect x="549" y="458" width="1" height="1"/>
<rect x="522" y="394" width="1" height="1"/>
<rect x="450" y="530" width="1" height="1"/>
<rect x="410" y="266" width="1" height="1"/>
<rect x="447" y="515" width="1" height="1"/>
<rect x="585" y="440" width="1" height="1"/>
<rect x="348" y="271" width="1" height="1"/>
<rect x="459" y="457" width="1" height="1"/>
<rect x="488" y="530" width="1" height="1"/>
<rect x="498" y="486" width="1" height="1"/>
<rect x="413" y="317" width="1" height="1"/>
<rect x="446" y="518" width="1" height="1"/>
<rect x="492" y="330" width="1" height="1"/>
<rect x="520" y="481" width="1" height="1"/>
<rect x="551" y="490" width="1" height="1"/>
<rect x="386" y="259" width="1" height="1"/>
<rect x="486" y="465" width="1" height="1"/>
<rect x="430" y="478" width="1" height="1"/>
<rect x="557" y="346" width="1" height="1"/>
<rect x="359" y="332" width="1" height="1"/>
<rect x="531" y="369" width="1" height="1"/>
<rect x="528" y="422" width="1" height="1"/>
<rect x="554" y="536" width="1" height="1"/>
<rect x="548" y="553" width="1" height="1"/>
<rect x="437" y="527" width="1" height="1"/>
<rect x="465" y="472" width="1" height="1"/>
<rect x="552" y="534" width="1" height="1"/>
<rect x="556" y="393" width="1" height="1"/>
<rect x="477" y="435" width="1" height="1"/>
<rect x="537" y="450" width="1" height="1"/>
<rect x="384" y="372" width="1" height="1"/>
<rect x="489" y="364" width="1" height="1"/>
<rect x="565" y="521" width="1" height="1"/>
<rect x="526" y="423" width="1" height="1"/>
<rect x="500" y="362" width="1" height="1"/>
<rect x="483" y="451" width="1" height="1"/>
<rect x="567" y="367" width="1" height="1"/>
<rect x="413" y="325" width="1" height="1"/>
<rect x="519" y="476" width="1" height="1"/>
<rect x="476" y="556" width="1" height="1"/>
<rect x="350" y="312" width="1" height="1"/>
<rect x="441" y="469" width="1" height="1"/>
<rect x="483" y="368" width="1" height="1"/>
<rect x="535" y="495" width="1" height="1"/>
<rect x="518" y="425" width="1" height="1"/>
<rect x="576" y="384" width="1" height="1"/>
<rect x="478" y="578" width="1" height="1"/>
<rect x="539" y="410" width="1" height="1"/>
<rect x="540" y="514" width="1" height="1"/>
<rect x="531" y="375" width="1" height="1"/>
<rect x="359" y="336" width="1" height="1"/>
<rect x="540" y="426" width="1" height="1"/>
<rect x="514" y="484" width="1" height="1"/>
<rect x="457" y="361" width="1" height="1"/>
<rect x="410" y="374" width="1" height="1"/>
<rect x="445" y="458" width="1" height="1"/>
<rect x="535" y="470" width="1" height="1"/>
<rect x="398" y="291" width="1" height="1"/>
<rect x="370" y="276" width="1" height="1"/>
<rect x="545" y="377" width="1" height="1"/>
<rect x="471" y="410" width="1" height="1"/>
<rect x="515" y="340" width="1" height="1"/>
<rect x="420" y="333" width="1" height="1"/>
<rect x="551" y="356" width="1" height="1"/>
<rect x="412" y="372" width="1" height="1"/>
<rect x="438" y="353" width="1" height="1"/>
<rect x="515" y="415" width="1" height="1"/>
<rect x="436" y="553" width="1" height="1"/>
<rect x="503" y="328" width="1" height="1"/>
<rect x="530" y="451" width="1" height="1"/>
<rect x="429" y="522" width="1" height="1"/>
<rect x="409" y="299" width="1" height="1"/>
<rect x="565" y="530" width="1" height="1"/>
<rect x="497" y="540" width="1" height="1"/>
<rect x="569" y="355" width="1" height="1"/>
<rect x="435" y="558" width="1" height="1"/>
<rect x="413" y="279" width="1" height="1"/>
<rect x="519" y="457" width="1" height="1"/>
<rect x="550" y="471" width="1" height="1"/>
<rect x="557" y="455" width="1" height="1"/>
<rect x="395" y="333" width="1" height="1"/>
<rect x="471" y="397" width="1" height="1"/>
<rect x="461" y="366" width="1" height="1"/>
<rect x="480" y="517" width="1" height="1"/>
<rect x="576" y="455" width="1" height="1"/>
<rect x="576" y="372" width="1" height="1"/>
<rect x="459" y="362" width="1" height="1"/>
<rect x="400" y="267" width="1" height="1"/>
<rect x="428" y="345" width="1" height="1"/>
<rect x="397" y="311" width="1" height="1"/>
<rect x="365" y="251" width="1" height="1"/>
<rect x="469" y="575" width="1" height="1"/>
<rect x="488" y="336" width="1" height="1"/>
<rect x="530" y="532" width="1" height="1"/>
<rect x="562" y="517" width="1" height="1"/>
<rect x="481" y="349" width="1" height="1"/>
<rect x="514" y="399" width="1" height="1"/>
<rect x="374" y="321" width="1" height="1"/>
<rect x="553" y="486" width="1" height="1"/>
<rect x="499" y="487" width="1" height="1"/>
<rect x="381" y="248" width="1" height="1"/>
<rect x="463" y="585" width="1" height="1"/>
<rect x="504" y="540" width="1" height="1"/>
<rect x="430" y="327" width="1" height="1"/>
<rect x="559" y="407" width="1" height="1"/>
<rect x="528" y="390" width="1" height="1"/>
<rect x="383" y="364" width="1" height="1"/>
<rect x="369" y="265" width="1" height="1"/>
<rect x="511" y="421" width="1" height="1"/>
<rect x="510" y="561" width="1" height="1"/>
<rect x="504" y="488" width="1" height="1"/>
<rect x="506" y="388" width="1" height="1"/>
<rect x="424" y="557" width="1" height="1"/>
<rect x="384" y="249" width="1" height="1"/>
<rect x="503" y="545" width="1" height="1"/>
<rect x="423" y="536" width="1" height="1"/>
<rect x="503" y="543" width="1" height="1"/>
<rect x="440" y="520" width="1" height="1"/>
<rect x="487" y="369" width="1" height="1"/>
<rect x="503" y="470" width="1" height="1"/>
<rect x="526" y="398" width="1" height="1"/>
<rect x="418" y="342" width="1" height="1"/>
<rect x="482" y="559" width="1" height="1"/>
<rect x="496" y="448" width="1" height="1"/>
<rect x="569" y="472" width="1" height="1"/>
<rect x="513" y="323" width="1" height="1"/>
<rect x="344" y="315" width="1" height="1"/>
<rect x="587" y="446" width="1" height="1"/>
<rect x="396" y="276" width="1" height="1"/>
<rect x="374" y="362" width="1" height="1"/>
<rect x="379" y="324" width="1" height="1"/>
<rect x="558" y="346" width="1" height="1"/>
<rect x="473" y="392" width="1" height="1"/>
<rect x="430" y="509" width="1" height="1"/>
<rect x="564" y="387" width="1" height="1"/>
<rect x="531" y="423" width="1" height="1"/>
<rect x="495" y="364" width="1" height="1"/>
<rect x="523" y="446" width="1" height="1"/>
<rect x="556" y="349" width="1" height="1"/>
<rect x="488" y="525" width="1" height="1"/>
<rect x="528" y="514" width="1" height="1"/>
<rect x="431" y="547" width="1" height="1"/>
<rect x="495" y="387" width="1" height="1"/>
<rect x="382" y="277" width="1" height="1"/>
<rect x="398" y="356" width="1" height="1"/>
<rect x="582" y="441" width="1" height="1"/>
<rect x="515" y="431" width="1" height="1"/>
<rect x="536" y="366" width="1" height="1"/>
<rect x="502" y="423" width="1" height="1"/>
<rect x="537" y="396" width="1" height="1"/>
<rect x="548" y="548" width="1" height="1"/>
<rect x="473" y="420" width="1" height="1"/>
<rect x="518" y="426" width="1" height="1"/>
<rect x="465" y="485" width="1" height="1"/>
<rect x="537" y="460" width="1" height="1"/>
<rect x="442" y="329" width="1" height="1"/>
<rect x="462" y="562" width="1" height="1"/>
<rect x="392" y="274" width="1" height="1"/>
<rect x="558" y="540" width="1" height="1"/>
<rect x="573" y="395" width="1" height="1"/>
<rect x="404" y="364" width="1" height="1"/>
<rect x="523" y="544" width="1" height="1"/>
<rect x="436" y="530" width="1" height="1"/>
<rect x="414" y="337" width="1" height="1"/>
<rect x="459" y="387" width="1" height="1"/>
<rect x="535" y="556" width="1" height="1"/>
<rect x="433" y="526" width="1" height="1"/>
<rect x="487" y="461" width="1" height="1"/>
<rect x="536" y="414" width="1" height="1"/>
<rect x="512" y="429" width="1" height="1"/>
<rect x="390" y="324" width="1" height="1"/>
<rect x="579" y="467" width="1" height="1"/>
<rect x="465" y="419" width="1" height="1"/>
<rect x="554" y="466" width="1" height="1"/>
<rect x="554" y="517" width="1" height="1"/>
<rect x="519" y="479" width="1" height="1"/>
<rect x="544" y="393" width="1" height="1"/>
<rect x="476" y="532" width="1" height="1"/>
<rect x="509" y="384" width="1" height="1"/>
<rect x="369" y="330" width="1" height="1"/>
<rect x="404" y="311" width="1" height="1"/>
<rect x="551" y="429" width="1" height="1"/>
<rect x="480" y="435" width="1" height="1"/>
<rect x="543" y="391" width="1" height="1"/>
<rect x="468" y="442" width="1" height="1"/>
<rect x="566" y="383" width="1" height="1"/>
<rect x="452" y="440" width="1" height="1"/>
<rect x="529" y="556" width="1" height="1"/>
<rect x="546" y="411" width="1" height="1"/>
<rect x="433" y="544" width="1" height="1"/>
<rect x="515" y="564" width="1" height="1"/>
<rect x="476" y="352" width="1" height="1"/>
<rect x="515" y="415" width="1" height="1"/>
<rect x="582" y="470" width="1" height="1"/>
<rect x="468" y="493" width="1" height="1"/>
<rect x="463" y="366" width="1" height="1"/>
<rect x="460" y="465" width="1" height="1"/>
<rect x="460" y="368" width="1" height="1"/>
<rect x="459" y="559" width="1" height="1"/>
<rect x="475" y="529" width="1" height="1"/>
<rect x="552" y="523" width="1" height="1"/>
<rect x="563" y="529" width="1" height="1"/>
<rect x="462" y="561" width="1" height="1"/>
<rect x="426" y="543" width="1" height="1"/>
<rect x="370" y="272" width="1" height="1"/>
<rect x="484" y="516" width="1" height="1"/>
<rect x="519" y="386" width="1" height="1"/>
<rect x="423" y="345" width="1" height="1"/>
<rect x="397" y="259" width="1" height="1"/>
<rect x="493" y="361" width="1" height="1"/>
<rect x="494" y="360" width="1" height="1"/>
<rect x="535" y="559" width="1" height="1"/>
<rect x="486" y="467" width="1" height="1"/>
<rect x="522" y="432" width="1" height="1"/>
<rect x="462" y="395" width="1" height="1"/>
<rect x="456" y="551" width="1" height="1"/>
<rect x="468" y="579" width="1" height="1"/>
<rect x="459" y="423" width="1" height="1"/>
<rect x="466" y="332" width="1" height="1"/>
<rect x="577" y="364" width="1" height="1"/>
<rect x="378" y="317" width="1" height="1"/>
<rect x="521" y="560" width="1" height="1"/>
<rect x="489" y="579" width="1" height="1"/>
<rect x="534" y="319" width="1" height="1"/>
<rect x="522" y="324" width="1" height="1"/>
<rect x="404" y="360" width="1" height="1"/>
<rect x="491" y="339" width="1" height="1"/>
<rect x="495" y="323" width="1" height="1"/>
<rect x="475" y="486" width="1" height="1"/>
<rect x="583" y="453" width="1" height="1"/>
<rect x="380" y="329" width="1" height="1"/>
<rect x="443" y="534" width="1" height="1"/>
<rect x="541" y="381" width="1" height="1"/>
<rect x="488" y="368" width="1" height="1"/>
<rect x="464" y="355" width="1" height="1"/>
<rect x="578" y="374" width="1" height="1"/>
<rect x="395" y="283" width="1" height="1"/>
<rect x="452" y="533" width="1" height="1"/>
<rect x="432" y="343" width="1" height="1"/>
<rect x="446" y="472" width="1" height="1"/>
<rect x="442" y="565" width="1" height="1"/>
<rect x="467" y="545" width="1" height="1"/>
<rect x="474" y="589" width="1" height="1"/>
<rect x="405" y="321" width="1" height="1"/>
<rect x="473" y="390" width="1" height="1"/>
<rect x="522" y="330" width="1" height="1"/>
<rect x="421" y="321" width="1" height="1"/>
<rect x="392" y="336" width="1" height="1"/>
<rect x="415" y="283" width="1" height="1"/>
<rect x="551" y="460" width="1" height="1"/>
<rect x="363" y="260" width="1" height="1"/>
<rect x="516" y="521" width="1" height="1"/>
<rect x="506" y="410" width="1" height="1"/>
<rect x="430" y="552" width="1" height="1"/>
<rect x="448" y="454" width="1" height="1"/>
<rect x="506" y="558" width="1" height="1"/>
<rect x="471" y="539" width="1" height="1"/>
<rect x="570" y="514" width="1" height="1"/>
<rect x="433" y="565" width="1" height="1"/>
<rect x="446" y="559" width="1" height="1"/>
<rect x="349" y="281" width="1" height="1"/>
<rect x="574" y="404" width="1" height="1"/>
<rect x="524" y="410" width="1" height="1"/>
<rect x="523" y="427" width="1" height="1"/>
<rect x="376" y="354" width="1" height="1"/>
<rect x="482" y="549" width="1" height="1"/>
<rect x="346" y="345" width="1" height="1"/>
<rect x="391" y="261" width="1" height="1"/>
<rect x="524" y="443" width="1" height="1"/>
<rect x="533" y="529" width="1" height="1"/>
<rect x="541" y="376" width="1" height="1"/>
<rect x="457" y="556" width="1" height="1"/>
<rect x="438" y="550" width="1" height="1"/>
<rect x="454" y="576" width="1" height="1"/>
<rect x="492" y="380" width="1" height="1"/>
<rect x="553" y="372" width="1" height="1"/>
<rect x="435" y="541" width="1" height="1"/>
<rect x="370" y="290" width="1" height="1"/>
<rect x="511" y="418" width="1" height="1"/>
<rect x="565" y="406" width="1" height="1"/>
<rect x="544" y="546" width="1" height="1"/>
<rect x="353" y="343" width="1" height="1"/>
<rect x="511" y="568" width="1" height="1"/>
<rect x="514" y="354" width="1" height="1"/>
<rect x="418" y="374" width="1" height="1"/>
<rect x="550" y="371" width="1" height="1"/>
<rect x="418" y="346" width="1" height="1"/>
<rect x="398" y="299" width="1" height="1"/>
<rect x="440" y="529" width="1" height="1"/>
<rect x="420" y="351" width="1" height="1"/>
<rect x="467" y="394" width="1" height="1"/>
<rect x="389" y="350" width="1" height="1"/>
<rect x="492" y="334" width="1" height="1"/>
<rect x="348" y="358" width="1" height="1"/>
<rect x="453" y="342" width="1" height="1"/>
<rect x="579" y="498" width="1" height="1"/>
<rect x="574" y="443" width="1" height="1"/>
<rect x="527" y="398" width="1" height="1"/>
<rect x="507" y="541" width="1" height="1"/>
<rect x="518" y="523" width="1" height="1"/>
<rect x="494" y="365" width="1" height="1"/>
<rect x="542" y="558" width="1" height="1"/>
<rect x="399" y="302" width="1" height="1"/>
<rect x="386" y="315" width="1" height="1"/>
<rect x="382" y="355" width="1" height="1"/>
<rect x="358" y="249" width="1" height="1"/>
<rect x="572" y="378" width="1" height="1"/>
<rect x="529" y="356" width="1" height="1"/>
<rect x="452" y="336" width="1" height="1"/>
<rect x="502" y="376" width="1" height="1"/>
<rect x="476" y="587" width="1" height="1"/>
<rect x="474" y="578" width="1" height="1"/>
<rect x="517" y="334" width="1" height="1"/>
<rect x="473" y="503" width="1" height="1"/>
<rect x="382" y="264" width="1" height="1"/>
<rect x="532" y="409" width="1" height="1"/>
<rect x="434" y="336" width="1" height="1"/>
<rect x="487" y="329" width="1" height="1"/>
<rect x="440" y="356" width="1" height="1"/>
<rect x="510" y="392" width="1" height="1"/>
<rect x="448" y="477" width="1" height="1"/>
<rect x="464" y="547" width="1" height="1"/>
<rect x="400" y="338" width="1" height="1"/>
<rect x="564" y="407" width="1" height="1"/>
<rect x="408" y="289" width="1" height="1"/>
<rect x="527" y="354" width="1" height="1"/>
<rect x="459" y="512" width="1" height="1"/>
<rect x="516" y="482" width="1" height="1"/>
<rect x="585" y="463" width="1" height="1"/>
<rect x="547" y="526" width="1" height="1"/>
<rect x="491" y="526" width="1" height="1"/>
<rect x="558" y="380" width="1" height="1"/>
<rect x="465" y="385" width="1" height="1"/>
<rect x="509" y="559" width="1" height="1"/>
<rect x="431" y="370" width="1" height="1"/>
<rect x="466" y="348" width="1" height="1"/>
<rect x="500" y="459" width="1" height="1"/>
<rect x="574" y="499" width="1" height="1"/>
<rect x="513" y="559" width="1" height="1"/>
<rect x="558" y="508" width="1" height="1"/>
<rect x="422" y="343" width="1" height="1"/>
<rect x="438" y="537" width="1" height="1"/>
<rect x="443" y="544" width="1" height="1"/>
<rect x="444" y="586" width="1" height="1"/>
<rect x="461" y="533" width="1" height="1"/>
<rect x="513" y="336" width="1" height="1"/>
<rect x="579" y="403" width="1" height="1"/>
<rect x="446" y="571" width="1" height="1"/>
<rect x="484" y="555" width="1" height="1"/>
<rect x="485" y="570" width="1" height="1"/>
<rect x="529" y="473" width="1" height="1"/>
<rect x="389" y="320" width="1" height="1"/>
<rect x="459" y="559" width="1" height="1"/>
<rect x="509" y="395" width="1" height="1"/>
<rect x="484" y="366" width="1" height="1"/>
<rect x="557" y="422" width="1" height="1"/>
<rect x="476" y="456" width="1" height="1"/>
<rect x="529" y="375" width="1" height="1"/>
<rect x="411" y="318" width="1" height="1"/>
<rect x="575" y="435" width="1" height="1"/>
<rect x="405" y="267" width="1" height="1"/>
<rect x="532" y="546" width="1" height="1"/>
<rect x="513" y="404" width="1" height="1"/>
<rect x="444" y="553" width="1" height="1"/>
<rect x="585" y="382" width="1" height="1"/>
<rect x="525" y="358" width="1" height="1"/>
<rect x="562" y="358" width="1" height="1"/>
<rect x="487" y="456" width="1" height="1"/>
<rect x="458" y="348" width="1" height="1"/>
<rect x="520" y="331" width="1" height="1"/>
<rect x="406" y="306" width="1" height="1"/>
<rect x="355" y="316" width="1" height="1"/>
<rect x="510" y="383" width="1" height="1"/>
<rect x="514" y="580" width="1" height="1"/>
<rect x="477" y="557" width="1" height="1"/>
<rect x="368" y="320" width="1" height="1"/>
<rect x="531" y="366" width="1" height="1"/>
<rect x="431" y="500" width="1" height="1"/>
<rect x="560" y="419" width="1" height="1"/>
<rect x="444" y="350" width="1" height="1"/>
<rect x="452" y="438" width="1" height="1"/>
<rect x="556" y="359" width="1" height="1"/>
<rect x="480" y="341" width="1" height="1"/>
<rect x="477" y="460" width="1" height="1"/>
<rect x="489" y="548" width="1" height="1"/>
<rect x="471" y="341" width="1" height="1"/>
<rect x="579" y="385" width="1" height="1"/>
<rect x="517" y="337" width="1" height="1"/>
<rect x="399" y="274" width="1" height="1"/>
<rect x="480" y="375" width="1" height="1"/>
<rect x="390" y="284" width="1" height="1"/>
<rect x="503" y="500" width="1" height="1"/>
<rect x="450" y="533" width="1" height="1"/>
<rect x="542" y="547" width="1" height="1"/>
<rect x="502" y="401" width="1" height="1"/>
<rect x="445" y="523" width="1" height="1"/>
<rect x="414" y="329" width="1" height="1"/>
<rect x="505" y="535" width="1" height="1"/>
<rect x="489" y="347" width="1" height="1"/>
<rect x="570" y="505" width="1" height="1"/>
<rect x="425" y="323" width="1" height="1"/>
<rect x="408" y="362" width="1" height="1"/>
<rect x="466" y="558" width="1" height="1"/>
<rect x="503" y="508" width="1" height="1"/>
<rect x="456" y="501" width="1" height="1"/>
<rect x="567" y="366" width="1" height="1"/>
<rect x="511" y="489" width="1" height="1"/>
<rect x="371" y="263" width="1" height="1"/>
<rect x="497" y="467" width="1" height="1"/>
<rect x="453" y="540" width="1" height="1"/>
<rect x="363" y="339" width="1" height="1"/>
<rect x="541" y="402" width="1" height="1"/>
<rect x="537" y="548" width="1" height="1"/>
<rect x="577" y="477" width="1" height="1"/>
<rect x="464" y="525" width="1" height="1"/>
<rect x="425" y="529" width="1" height="1"/>
<rect x="441" y="560" width="1" height="1"/>
<rect x="521" y="324" width="1" height="1"/>
<rect x="464" y="368" width="1" height="1"/>
<rect x="507" y="493" width="1" height="1"/>
<rect x="500" y="532" width="1" height="1"/>
<rect x="383" y="317" width="1" height="1"/>
<rect x="529" y="399" width="1" height="1"/>
<rect x="423" y="357" width="1" height="1"/>
<rect x="476" y="478" width="1" height="1"/>
<rect x="436" y="363" width="1" height="1"/>
<rect x="517" y="523" width="1" height="1"/>
<rect x="559" y="463" width="1" height="1"/>
<rect x="412" y="247" width="1" height="1"/>
<rect x="429" y="362" width="1" height="1"/>
<rect x="389" y="342" width="1" height="1"/>
<rect x="459" y="404" width="1" height="1"/>
<rect x="355" y="283" width="1" height="1"/>
<rect x="503" y="552" width="1" height="1"/>
<rect x="441" y="456" width="1" height="1"/>
<rect x="538" y="431" width="1" height="1"/>
<rect x="512" y="498" width="1" height="1"/>
<rect x="393" y="282" width="1" height="1"/>
<rect x="438" y="332" width="1" height="1"/>
<rect x="411" y="269" width="1" height="1"/>
<rect x="520" y="567" width="1" height="1"/>
<rect x="521" y="484" width="1" height="1"/>
<rect x="440" y="446" width="1" height="1"/>
<rect x="518" y="339" width="1" height="1"/>
<rect x="497" y="364" width="1" height="1"/>
<rect x="510" y="408" width="1" height="1"/>
<rect x="582" y="407" width="1" height="1"/>
<rect x="351" y="268" width="1" height="1"/>
<rect x="533" y="417" width="1" height="1"/>
<rect x="553" y="433" width="1" height="1"/>
<rect x="486" y="403" width="1" height="1"/>
<rect x="519" y="387" width="1" height="1"/>
<rect x="412" y="286" width="1" height="1"/>
<rect x="389" y="305" width="1" height="1"/>
<rect x="430" y="562" width="1" height="1"/>
<rect x="469" y="341" width="1" height="1"/>
<rect x="459" y="404" width="1" height="1"/>
<rect x="468" y="591" width="1" height="1"/>
<rect x="500" y="329" width="1" height="1"/>
<rect x="382" y="295" width="1" height="1"/>
<rect x="379" y="291" width="1" height="1"/>
<rect x="433" y="343" width="1" height="1"/>
<rect x="496" y="589" width="1" height="1"/>
<rect x="517" y="487" width="1" height="1"/>
<rect x="437" y="529" width="1" height="1"/>
<rect x="389" y="314" width="1" height="1"/>
<rect x="545" y="546" width="1" height="1"/>
<rect x="359" y="266" width="1" height="1"/>
<rect x="512" y="439" width="1" height="1"/>
<rect x="454" y="376" width="1" height="1"/>
<rect x="385" y="371" width="1" height="1"/>
<rect x="351" y="294" width="1" height="1"/>
<rect x="445" y="458" width="1" height="1"/>
<rect x="542" y="547" width="1" height="1"/>
<rect x="489" y="519" width="1" height="1"/>
<rect x="444" y="586" width="1" height="1"/>
<rect x="521" y="556" width="1" height="1"/>
<rect x="509" y="487" width="1" height="1"/>
<rect x="570" y="412" width="1" height="1"/>
<rect x="543" y="459" width="1" height="1"/>
<rect x="570" y="437" width="1" height="1"/>
<rect x="407" y="284" width="1" height="1"/>
<rect x="536" y="472" width="1" height="1"/>
<rect x="533" y="374" width="1" height="1"/>
<rect x="374" y="359" width="1" height="1"/>
<rect x="457" y="560" width="1" height="1"/>
<rect x="519" y="374" width="1" height="1"/>
<rect x="475" y="498" width="1" height="1"/>
<rect x="560" y="524" width="1" height="1"/>
<rect x="454" y="546" width="1" height="1"/>
<rect x="408" y="356" width="1" height="1"/>
<rect x="514" y="503" width="1" height="1"/>
<rect x="550" y="382" width="1" height="1"/>
<rect x="525" y="324" width="1" height="1"/>
<rect x="422" y="363" width="1" height="1"/>
<rect x="350" y="362" width="1" height="1"/>
<rect x="371" y="332" width="1" height="1"/>
<rect x="466" y="440" width="1" height="1"/>
<rect x="377" y="281" width="1" height="1"/>
<rect x="400" y="365" width="1" height="1"/>
<rect x="493" y="443" width="1" height="1"/>
<rect x="444" y="496" width="1" height="1"/>
<rect x="484" y="519" width="1" height="1"/>
<rect x="554" y="525" width="1" height="1"/>
<rect x="366" y="332" width="1" height="1"/>
<rect x="433" y="549" width="1" height="1"/>
<rect x="524" y="320" width="1" height="1"/>
<rect x="523" y="365" width="1" height="1"/>
<rect x="498" y="496" width="1" height="1"/>
<rect x="526" y="447" width="1" height="1"/>
<rect x="456" y="393" width="1" height="1"/>
<rect x="482" y="538" width="1" height="1"/>
<rect x="454" y="413" width="1" height="1"/>
<rect x="514" y="518" width="1" height="1"/>
<rect x="545" y="460" width="1" height="1"/>
<rect x="480" y="561" width="1" height="1"/>
<rect x="398" y="252" width="1" height="1"/>
<rect x="512" y="352" width="1" height="1"/>
<rect x="534" y="542" width="1" height="1"/>
<rect x="356" y="335" width="1" height="1"/>
<rect x="483" y="582" width="1" height="1"/>
<rect x="534" y="335" width="1" height="1"/>
<rect x="456" y="565" width="1" height="1"/>
<rect x="560" y="413" width="1" height="1"/>
<rect x="440" y="526" width="1" height="1"/>
<rect x="350" y="313" width="1" height="1"/>
<rect x="576" y="428" width="1" height="1"/>
<rect x="473" y="430" width="1" height="1"/>
<rect x="462" y="412" width="1" height="1"/>
<rect x="428" y="490" width="1" height="1"/>
<rect x="457" y="535" width="1" height="1"/>
<rect x="471" y="343" width="1" height="1"/>
<rect x="450" y="342" width="1" height="1"/>
<rect x="474" y="371" width="1" height="1"/>
<rect x="584" y="423" width="1" height="1"/>
<rect x="482" y="531" width="1" height="1"/>
<rect x="499" y="389" width="1" height="1"/>
<rect x="467" y="524" width="1" height="1"/>
<rect x="373" y="363" width="1" height="1"/>
<rect x="434" y="525" width="1" height="1"/>
<rect x="392" y="323" width="1" height="1"/>
<rect x="446" y="459" width="1" height="1"/>
<rect x="392" y="334" width="1" height="1"/>
<rect x="356" y="338" width="1" height="1"/>
<rect x="438" y="452" width="1" height="1"/>
<rect x="538" y="342" width="1" height="1"/>
<rect x="521" y="509" width="1" height="1"/>
<rect x="573" y="503" width="1" height="1"/>
<rect x="501" y="467" width="1" height="1"/>
<rect x="436" y="557" width="1" height="1"/>
<rect x="388" y="370" width="1" height="1"/>
<rect x="567" y="469" width="1" height="1"/>
<rect x="354" y="312" width="1" height="1"/>
<rect x="540" y="484" width="1" height="1"/>
<rect x="583" y="470" width="1" height="1"/>
<rect x="473" y="471" width="1" height="1"/>
<rect x="411" y="365" width="1" height="1"/>
<rect x="350" y="352" width="1" height="1"/>
<rect x="494" y="421" width="1" height="1"/>
<rect x="459" y="435" width="1" height="1"/>
<rect x="516" y="359" width="1" height="1"/>
<rect x="543" y="361" width="1" height="1"/>
<rect x="558" y="331" width="1" height="1"/>
<rect x="503" y="584" width="1" height="1"/>
<rect x="489" y="376" width="1" height="1"/>
<rect x="516" y="572" width="1" height="1"/>
<rect x="373" y="371" width="1" height="1"/>
<rect x="485" y="365" width="1" height="1"/>
<rect x="372" y="373" width="1" height="1"/>
<rect x="449" y="417" width="1" height="1"/>
<rect x="466" y="484" width="1" height="1"/>
<rect x="553" y="517" width="1" height="1"/>
<rect x="538" y="568" width="1" height="1"/>
<rect x="463" y="537" width="1" height="1"/>
<rect x="539" y="369" width="1" height="1"/>
<rect x="533" y="414" width="1" height="1"/>
<rect x="526" y="360" width="1" height="1"/>
<rect x="448" y="428" width="1" height="1"/>
<rect x="559" y="477" width="1" height="1"/>
<rect x="497" y="367" width="1" height="1"/>
<rect x="569" y="353" width="1" height="1"/>
<rect x="473" y="585" width="1" height="1"/>
<rect x="452" y="489" width="1" height="1"/>
<rect x="478" y="531" width="1" height="1"/>
<rect x="556" y="544" width="1" height="1"/>
<rect x="441" y="357" width="1" height="1"/>
<rect x="462" y="422" width="1" height="1"/>
<rect x="378" y="325" width="1" height="1"/>
<rect x="472" y="560" width="1" height="1"/>
<rect x="537" y="398" width="1" height="1"/>
<rect x="465" y="566" width="1" height="1"/>
<rect x="479" y="485" width="1" height="1"/>
<rect x="493" y="523" width="1" height="1"/>
<rect x="453" y="358" width="1" height="1"/>
<rect x="512" y="375" width="1" height="1"/>
<rect x="375" y="285" width="1" height="1"/>
<rect x="511" y="336" width="1" height="1"/>
<rect x="556" y="458" width="1" height="1"/>
<rect x="497" y="343" width="1" height="1"/>
<rect x="569" y="519" width="1" height="1"/>
<rect x="543" y="433" width="1" height="1"/>
<rect x="437" y="462" width="1" height="1"/>
<rect x="376" y="314" width="1" height="1"/>
<rect x="452" y="532" width="1" height="1"/>
<rect x="588" y="439" width="1" height="1"/>
<rect x="502" y="393" width="1" height="1"/>
<rect x="493" y="375" width="1" height="1"/>
<rect x="559" y="422" width="1" height="1"/>
<rect x="467" y="342" width="1" height="1"/>
<rect x="403" y="365" width="1" height="1"/>
<rect x="523" y="465" width="1" height="1"/>
<rect x="466" y="377" width="1" height="1"/>
<rect x="435" y="485" width="1" height="1"/>
<rect x="497" y="446" width="1" height="1"/>
<rect x="541" y="406" width="1" height="1"/>
<rect x="538" y="352" width="1" height="1"/>
<rect x="348" y="298" width="1" height="1"/>
<rect x="374" y="302" width="1" height="1"/>
<rect x="529" y="392" width="1" height="1"/>
<rect x="507" y="550" width="1" height="1"/>
<rect x="453" y="551" width="1" height="1"/>
<rect x="387" y="358" width="1" height="1"/>
<rect x="377" y="368" width="1" height="1"/>
<rect x="546" y="363" width="1" height="1"/>
<rect x="348" y="268" width="1" height="1"/>
<rect x="480" y="522" width="1" height="1"/>
<rect x="465" y="559" width="1" height="1"/>
<rect x="570" y="399" width="1" height="1"/>
<rect x="373" y="271" width="1" height="1"/>
<rect x="442" y="355" width="1" height="1"/>
<rect x="541" y="370" width="1" height="1"/>
<rect x="451" y="467" width="1" height="1"/>
<rect x="457" y="481" width="1" height="1"/>
<rect x="575" y="478" width="1" height="1"/>
<rect x="571" y="345" width="1" height="1"/>
<rect x="494" y="412" width="1" height="1"/>
<rect x="471" y="393" width="1" height="1"/>
<rect x="502" y="552" width="1" height="1"/>
<rect x="499" y="474" width="1" height="1"/>
<rect x="462" y="380" width="1" height="1"/>
<rect x="417" y="318" width="1" height="1"/>
<rect x="547" y="372" width="1" height="1"/>
<rect x="426" y="523" width="1" height="1"/>
<rect x="424" y="360" width="1" height="1"/>
<rect x="469" y="463" width="1" height="1"/>
<rect x="372" y="266" width="1" height="1"/>
<rect x="533" y="332" width="1" height="1"/>
<rect x="405" y="251" width="1" height="1"/>
<rect x="487" y="440" width="1" height="1"/>
<rect x="523" y="370" width="1" height="1"/>
<rect x="513" y="420" width="1" height="1"/>
<rect x="574" y="421" width="1" height="1"/>
<rect x="362" y="372" width="1" height="1"/>
<rect x="433" y="544" width="1" height="1"/>
<rect x="491" y="436" width="1" height="1"/>
<rect x="502" y="395" width="1" height="1"/>
<rect x="518" y="562" width="1" height="1"/>
<rect x="443" y="578" width="1" height="1"/>
<rect x="359" y="345" width="1" height="1"/>
<rect x="385" y="367" width="1" height="1"/>
<rect x="514" y="455" width="1" height="1"/>
<rect x="526" y="453" width="1" height="1"/>
<rect x="488" y="382" width="1" height="1"/>
<rect x="345" y="316" width="1" height="1"/>
<rect x="429" y="355" width="1" height="1"/>
<rect x="536" y="427" width="1" height="1"/>
<rect x="566" y="442" width="1" height="1"/>
<rect x="519" y="581" width="1" height="1"/>
<rect x="524" y="485" width="1" height="1"/>
<rect x="481" y="379" width="1" height="1"/>
<rect x="345" y="346" width="1" height="1"/>
<rect x="562" y="470" width="1" height="1"/>
<rect x="549" y="414" width="1" height="1"/>
<rect x="497" y="586" width="1" height="1"/>
<rect x="571" y="419" width="1" height="1"/>
<rect x="454" y="426" width="1" height="1"/>
<rect x="494" y="573" width="1" height="1"/>
<rect x="572" y="464" width="1" height="1"/>
<rect x="351" y="338" width="1" height="1"/>
<rect x="546" y="393" width="1" height="1"/>
<rect x="471" y="402" width="1" height="1"/>
<rect x="488" y="354" width="1" height="1"/>
<rect x="398" y="374" width="1" height="1"/>
<rect x="479" y="502" width="1" height="1"/>
<rect x="501" y="462" width="1" height="1"/>
<rect x="571" y="476" width="1" height="1"/>
<rect x="467" y="355" width="1" height="1"/>
<rect x="477" y="514" width="1" height="1"/>
<rect x="466" y="450" width="1" height="1"/>
<rect x="360" y="321" width="1" height="1"/>
<rect x="479" y="550" width="1" height="1"/>
<rect x="472" y="454" width="1" height="1"/>
<rect x="496" y="485" width="1" height="1"/>
<rect x="564" y="469" width="1" height="1"/>
<rect x="482" y="561" width="1" height="1"/>
<rect x="452" y="430" width="1" height="1"/>
<rect x="487" y="569" width="1" height="1"/>
<rect x="358" y="328" width="1" height="1"/>
<rect x="531" y="519" width="1" height="1"/>
<rect x="509" y="326" width="1" height="1"/>
<rect x="573" y="438" width="1" height="1"/>
<rect x="552" y="533" width="1" height="1"/>
<rect x="507" y="422" width="1" height="1"/>
<rect x="529" y="570" width="1" height="1"/>
<rect x="494" y="470" width="1" height="1"/>
<rect x="527" y="477" width="1" height="1"/>
<rect x="539" y="327" width="1" height="1"/>
<rect x="402" y="374" width="1" height="1"/>
<rect x="464" y="518" width="1" height="1"/>
<rect x="420" y="357" width="1" height="1"/>
<rect x="446" y="475" width="1" height="1"/>
<rect x="531" y="391" width="1" height="1"/>
<rect x="465" y="480" width="1" height="1"/>
<rect x="367" y="351" width="1" height="1"/>
<rect x="452" y="417" width="1" height="1"/>
<rect x="438" y="549" width="1" height="1"/>
<rect x="483" y="456" width="1" height="1"/>
<rect x="411" y="288" width="1" height="1"/>
<rect x="545" y="508" width="1" height="1"/>
<rect x="414" y="277" width="1" height="1"/>
<rect x="534" y="341" width="1" height="1"/>
<rect x="532" y="330" width="1" height="1"/>
<rect x="424" y="322" width="1" height="1"/>
<rect x="497" y="518" width="1" height="1"/>
<rect x="575" y="382" width="1" height="1"/>
<rect x="522" y="494" width="1" height="1"/>
<rect x="542" y="407" width="1" height="1"/>
<rect x="392" y="285" width="1" height="1"/>
<rect x="557" y="443" width="1" height="1"/>
<rect x="471" y="390" width="1" height="1"/>
<rect x="576" y="389" width="1" height="1"/>
<rect x="497" y="452" width="1" height="1"/>
<rect x="495" y="370" width="1" height="1"/>
<rect x="545" y="550" width="1" height="1"/>
<rect x="362" y="337" width="1" height="1"/>
<rect x="496" y="579" width="1" height="1"/>
<rect x="489" y="590" width="1" height="1"/>
<rect x="464" y="534" width="1" height="1"/>
<rect x="402" y="300" width="1" height="1"/>
<rect x="370" y="335" width="1" height="1"/>
<rect x="537" y="425" width="1" height="1"/>
<rect x="540" y="411" width="1" height="1"/>
<rect x="548" y="368" width="1" height="1"/>
<rect x="492" y="375" width="1" height="1"/>
<rect x="556" y="366" width="1" height="1"/>
<rect x="577" y="473" width="1" height="1"/>
<rect x="553" y="453" width="1" height="1"/>
<rect x="542" y="326" width="1" height="1"/>
<rect x="446" y="559" width="1" height="1"/>
<rect x="344" y="296" width="1" height="1"/>
<rect x="519" y="380" width="1" height="1"/>
<rect x="503" y="389" width="1" height="1"/>
<rect x="466" y="476" width="1" height="1"/>
<rect x="487" y="586" width="1" height="1"/>
<rect x="568" y="385" width="1" height="1"/>
<rect x="473" y="453" width="1" height="1"/>
<rect x="444" y="346" width="1" height="1"/>
<rect x="551" y="554" width="1" height="1"/>
<rect x="548" y="468" width="1" height="1"/>
<rect x="402" y="336" width="1" height="1"/>
<rect x="361" y="283" width="1" height="1"/>
<rect x="529" y="404" width="1" height="1"/>
<rect x="524" y="332" width="1" height="1"/>
<rect x="416" y="343" width="1" height="1"/>
<rect x="451" y="381" width="1" height="1"/>
<rect x="515" y="410" width="1" height="1"/>
<rect x="401" y="341" width="1" height="1"/>
<rect x="384" y="310" width="1" height="1"/>
<rect x="390" y="259" width="1" height="1"/>
<rect x="473" y="464" width="1" height="1"/>
<rect x="502" y="467" width="1" height="1"/>
<rect x="361" y="268" width="1" height="1"/>
<rect x="366" y="374" width="1" height="1"/>
<rect x="478" y="513" width="1" height="1"/>
<rect x="556" y="452" width="1" height="1"/>
<rect x="474" y="401" width="1" height="1"/>
<rect x="394" y="320" width="1" height="1"/>
<rect x="498" y="330" width="1" height="1"/>
<rect x="531" y="336" width="1" height="1"/>
<rect x="475" y="583" width="1" height="1"/>
<rect x="383" y="253" width="1" height="1"/>
<rect x="427" y="562" width="1" height="1"/>
<rect x="455" y="373" width="1" height="1"/>
<rect x="454" y="570" width="1" height="1"/>
<rect x="470" y="540" width="1" height="1"/>
<rect x="453" y="463" width="1" height="1"/>
<rect x="488" y="493" width="1" height="1"/>
<rect x="581" y="406" width="1" height="1"/>
<rect x="527" y="542" width="1" height="1"/>
<rect x="353" y="352" width="1" height="1"/>
<rect x="375" y="302" width="1" height="1"/>
<rect x="362" y="319" width="1" height="1"/>
<rect x="494" y="399" width="1" height="1"/>
<rect x="562" y="346" width="1" height="1"/>
<rect x="537" y="331" width="1" height="1"/>
<rect x="461" y="456" width="1" height="1"/>
<rect x="509" y="325" width="1" height="1"/>
<rect x="483" y="579" width="1" height="1"/>
<rect x="402" y="279" width="1" height="1"/>
<rect x="369" y="336" width="1" height="1"/>
<rect x="454" y="428" width="1" height="1"/>
<rect x="550" y="441" width="1" height="1"/>
<rect x="459" y="497" width="1" height="1"/>
<rect x="473" y="359" width="1" height="1"/>
<rect x="472" y="366" width="1" height="1"/>
<rect x="513" y="356" width="1" height="1"/>
<rect x="443" y="499" width="1" height="1"/>
<rect x="569" y="444" width="1" height="1"/>
<rect x="486" y="371" width="1" height="1"/>
<rect x="353" y="351" width="1" height="1"/>
<rect x="415" y="305" width="1" height="1"/>
<rect x="412" y="249" width="1" height="1"/>
<rect x="452" y="366" width="1" height="1"/>
<rect x="490" y="493" width="1" height="1"/>
<rect x="520" y="512" width="1" height="1"/>
<rect x="577" y="451" width="1" height="1"/>
<rect x="505" y="472" width="1" height="1"/>
<rect x="472" y="590" width="1" height="1"/>
<rect x="516" y="505" width="1" height="1"/>
<rect x="498" y="438" width="1" height="1"/>
<rect x="449" y="355" width="1" height="1"/>
<rect x="553" y="366" width="1" height="1"/>
<rect x="433" y="513" width="1" height="1"/>
<rect x="520" y="556" width="1" height="1"/>
<rect x="555" y="529" width="1" height="1"/>
<rect x="536" y="418" width="1" height="1"/>
<rect x="352" y="314" width="1" height="1"/>
<rect x="541" y="381" width="1" height="1"/>
<rect x="460" y="487" width="1" height="1"/>
<rect x="442" y="336" width="1" height="1"/>
<rect x="455" y="505" width="1" height="1"/>
<rect x="512" y="365" width="1" height="1"/>
<rect x="471" y="452" width="1" height="1"/>
<rect x="528" y="341" width="1" height="1"/>
<rect x="449" y="513" width="1" height="1"/>
<rect x="505" y="447" width="1" height="1"/>
<rect x="456" y="524" width="1" height="1"/>
<rect x="514" y="427" width="1" height="1"/>
<rect x="348" y="358" width="1" height="1"/>
<rect x="553" y="553" width="1" height="1"/>
<rect x="364" y="368" width="1" height="1"/>
<rect x="468" y="376" width="1" height="1"/>
<rect x="453" y="471" width="1" height="1"/>
<rect x="369" y="257" width="1" height="1"/>
<rect x="535" y="465" width="1" height="1"/>
<rect x="518" y="469" width="1" height="1"/>
<rect x="355" y="293" width="1" height="1"/>
<rect x="571" y="425" width="1" height="1"/>
<rect x="429" y="507" width="1" height="1"/>
<rect x="516" y="326" width="1" height="1"/>
<rect x="530" y="423" width="1" height="1"/>
<rect x="410" y="293" width="1" height="1"/>
<rect x="448" y="565" width="1" height="1"/>
<rect x="555" y="513" width="1" height="1"/>
<rect x="505" y="553" width="1" height="1"/>
<rect x="504" y="535" width="1" height="1"/>
</g>
<g stroke="#333" stroke-width="1.15" fill="none">
<line x1="400.8" y1="270.6" x2="400.8" y2="532.7"/>
<line x1="341.3" y1="423.8" x2="582.4" y2="413.5"/>
<line x1="394.1" y1="374" x2="412.6" y2="508.7"/>
</g>
<g fill="#7a7a7a">
<rect x="431.2" y="347.9" width="1.6" height="1.6"/>
<rect x="453.3" y="377.4" width="1.6" height="1.6"/>
<rect x="521.6" y="380.0" width="1.6" height="1.6"/>
<rect x="539.7" y="404.7" width="1.6" height="1.6"/>
<rect x="560.4" y="434.6" width="1.6" height="1.6"/>
<rect x="537.1" y="448.6" width="1.6" height="1.6"/>
<rect x="568.5" y="470.8" width="1.6" height="1.6"/>
<rect x="534.5" y="494.0" width="1.6" height="1.6"/>
<rect x="505.7" y="502.2" width="1.6" height="1.6"/>
<rect x="511.3" y="507.7" width="1.6" height="1.6"/>
<rect x="444.8" y="510.3" width="1.6" height="1.6"/>
<rect x="486.5" y="521.4" width="1.6" height="1.6"/>
<rect x="411.6" y="533.5" width="1.6" height="1.6"/>
<rect x="449.6" y="590.0" width="1.6" height="1.6"/>
<rect x="374.7" y="267.8" width="1.6" height="1.6"/>
<rect x="474.3" y="358.2" width="1.6" height="1.6"/>
</g>
<g>
<polygon points="373.10,318.30 369.20,316.05 369.20,311.55 373.10,309.30 377.00,311.55 377.00,316.05" fill="#5aaf5a" stroke="#3b8a3b" stroke-width="0.9"/>
<rect x="372.1" y="312.8" width="2" height="2" fill="#2a5a2a"/>
<polygon points="400.80,332.30 396.90,330.05 396.90,325.55 400.80,323.30 404.70,325.55 404.70,330.05" fill="#5aaf5a" stroke="#3b8a3b" stroke-width="0.9"/>
<rect x="399.8" y="326.8" width="2" height="2" fill="#2a5a2a"/>
<polygon points="370.90,361.90 367.00,359.65 367.00,355.15 370.90,352.90 374.80,355.15 374.80,359.65" fill="#5aaf5a" stroke="#3b8a3b" stroke-width="0.9"/>
<rect x="369.9" y="356.4" width="2" height="2" fill="#2a5a2a"/>
<polygon points="408.20,366.70 404.30,364.45 404.30,359.95 408.20,357.70 412.10,359.95 412.10,364.45" fill="#5aaf5a" stroke="#3b8a3b" stroke-width="0.9"/>
<rect x="407.2" y="361.2" width="2" height="2" fill="#2a5a2a"/>
<polygon points="422.90,363.00 419.00,360.75 419.00,356.25 422.90,354.00 426.80,356.25 426.80,360.75" fill="#5aaf5a" stroke="#3b8a3b" stroke-width="0.9"/>
<rect x="421.9" y="357.5" width="2" height="2" fill="#2a5a2a"/>
<polygon points="491.20,364.80 487.30,362.55 487.30,358.05 491.20,355.80 495.10,358.05 495.10,362.55" fill="#5aaf5a" stroke="#3b8a3b" stroke-width="0.9"/>
<rect x="490.2" y="359.3" width="2" height="2" fill="#2a5a2a"/>
<polygon points="499.30,399.10 495.40,396.85 495.40,392.35 499.30,390.10 503.20,392.35 503.20,396.85" fill="#5aaf5a" stroke="#3b8a3b" stroke-width="0.9"/>
<rect x="498.3" y="393.6" width="2" height="2" fill="#2a5a2a"/>
<polygon points="475.70,413.20 471.80,410.95 471.80,406.45 475.70,404.20 479.60,406.45 479.60,410.95" fill="#5aaf5a" stroke="#3b8a3b" stroke-width="0.9"/>
<rect x="474.7" y="407.7" width="2" height="2" fill="#2a5a2a"/>
<polygon points="465.40,423.90 461.50,421.65 461.50,417.15 465.40,414.90 469.30,417.15 469.30,421.65" fill="#5aaf5a" stroke="#3b8a3b" stroke-width="0.9"/>
<rect x="464.4" y="418.4" width="2" height="2" fill="#2a5a2a"/>
<polygon points="561.00,391.40 557.10,389.15 557.10,384.65 561.00,382.40 564.90,384.65 564.90,389.15" fill="#5aaf5a" stroke="#3b8a3b" stroke-width="0.9"/>
<rect x="560.0" y="385.9" width="2" height="2" fill="#2a5a2a"/>
<polygon points="564.30,396.20 560.40,393.95 560.40,389.45 564.30,387.20 568.20,389.45 568.20,393.95" fill="#5aaf5a" stroke="#3b8a3b" stroke-width="0.9"/>
<rect x="563.3" y="390.7" width="2" height="2" fill="#2a5a2a"/>
<polygon points="574.30,386.60 570.40,384.35 570.40,379.85 574.30,377.60 578.20,379.85 578.20,384.35" fill="#5aaf5a" stroke="#3b8a3b" stroke-width="0.9"/>
<rect x="573.3" y="381.1" width="2" height="2" fill="#2a5a2a"/>
<polygon points="527.00,413.90 523.10,411.65 523.10,407.15 527.00,404.90 530.90,407.15 530.90,411.65" fill="#5aaf5a" stroke="#3b8a3b" stroke-width="0.9"/>
<rect x="526.0" y="408.4" width="2" height="2" fill="#2a5a2a"/>
<polygon points="516.70,424.20 512.80,421.95 512.80,417.45 516.70,415.20 520.60,417.45 520.60,421.95" fill="#5aaf5a" stroke="#3b8a3b" stroke-width="0.9"/>
<rect x="515.7" y="418.7" width="2" height="2" fill="#2a5a2a"/>
<polygon points="529.60,421.30 525.70,419.05 525.70,414.55 529.60,412.30 533.50,414.55 533.50,419.05" fill="#5aaf5a" stroke="#3b8a3b" stroke-width="0.9"/>
<rect x="528.6" y="415.8" width="2" height="2" fill="#2a5a2a"/>
<polygon points="582.40,421.30 578.50,419.05 578.50,414.55 582.40,412.30 586.30,414.55 586.30,419.05" fill="#5aaf5a" stroke="#3b8a3b" stroke-width="0.9"/>
<rect x="581.4" y="415.8" width="2" height="2" fill="#2a5a2a"/>
<polygon points="492.70,438.30 488.80,436.05 488.80,431.55 492.70,429.30 496.60,431.55 496.60,436.05" fill="#5aaf5a" stroke="#3b8a3b" stroke-width="0.9"/>
<rect x="491.7" y="432.8" width="2" height="2" fill="#2a5a2a"/>
<polygon points="496.80,443.40 492.90,441.15 492.90,436.65 496.80,434.40 500.70,436.65 500.70,441.15" fill="#5aaf5a" stroke="#3b8a3b" stroke-width="0.9"/>
<rect x="495.8" y="437.9" width="2" height="2" fill="#2a5a2a"/>
<polygon points="483.10,447.90 479.20,445.65 479.20,441.15 483.10,438.90 487.00,441.15 487.00,445.65" fill="#5aaf5a" stroke="#3b8a3b" stroke-width="0.9"/>
<rect x="482.1" y="442.4" width="2" height="2" fill="#2a5a2a"/>
<polygon points="472.80,457.80 468.90,455.55 468.90,451.05 472.80,448.80 476.70,451.05 476.70,455.55" fill="#5aaf5a" stroke="#3b8a3b" stroke-width="0.9"/>
<rect x="471.8" y="452.3" width="2" height="2" fill="#2a5a2a"/>
<polygon points="557.30,435.70 553.40,433.45 553.40,428.95 557.30,426.70 561.20,428.95 561.20,433.45" fill="#5aaf5a" stroke="#3b8a3b" stroke-width="0.9"/>
<rect x="556.3" y="430.2" width="2" height="2" fill="#2a5a2a"/>
<polygon points="548.10,445.30 544.20,443.05 544.20,438.55 548.10,436.30 552.00,438.55 552.00,443.05" fill="#5aaf5a" stroke="#3b8a3b" stroke-width="0.9"/>
<rect x="547.1" y="439.8" width="2" height="2" fill="#2a5a2a"/>
<polygon points="534.00,449.30 530.10,447.05 530.10,442.55 534.00,440.30 537.90,442.55 537.90,447.05" fill="#5aaf5a" stroke="#3b8a3b" stroke-width="0.9"/>
<rect x="533.0" y="443.8" width="2" height="2" fill="#2a5a2a"/>
<polygon points="513.70,469.30 509.80,467.05 509.80,462.55 513.70,460.30 517.60,462.55 517.60,467.05" fill="#5aaf5a" stroke="#3b8a3b" stroke-width="0.9"/>
<rect x="512.7" y="463.8" width="2" height="2" fill="#2a5a2a"/>
<polygon points="499.70,473.30 495.80,471.05 495.80,466.55 499.70,464.30 503.60,466.55 503.60,471.05" fill="#5aaf5a" stroke="#3b8a3b" stroke-width="0.9"/>
<rect x="498.7" y="467.8" width="2" height="2" fill="#2a5a2a"/>
<polygon points="504.10,477.40 500.20,475.15 500.20,470.65 504.10,468.40 508.00,470.65 508.00,475.15" fill="#5aaf5a" stroke="#3b8a3b" stroke-width="0.9"/>
<rect x="503.1" y="471.9" width="2" height="2" fill="#2a5a2a"/>
<polygon points="439.20,481.10 435.30,478.85 435.30,474.35 439.20,472.10 443.10,474.35 443.10,478.85" fill="#5aaf5a" stroke="#3b8a3b" stroke-width="0.9"/>
<rect x="438.2" y="475.6" width="2" height="2" fill="#2a5a2a"/>
<polygon points="490.10,482.90 486.20,480.65 486.20,476.15 490.10,473.90 494.00,476.15 494.00,480.65" fill="#5aaf5a" stroke="#3b8a3b" stroke-width="0.9"/>
<rect x="489.1" y="477.4" width="2" height="2" fill="#2a5a2a"/>
<polygon points="554.70,479.20 550.80,476.95 550.80,472.45 554.70,470.20 558.60,472.45 558.60,476.95" fill="#5aaf5a" stroke="#3b8a3b" stroke-width="0.9"/>
<rect x="553.7" y="473.7" width="2" height="2" fill="#2a5a2a"/>
<polygon points="580.50,466.00 576.60,463.75 576.60,459.25 580.50,457.00 584.40,459.25 584.40,463.75" fill="#5aaf5a" stroke="#3b8a3b" stroke-width="0.9"/>
<rect x="579.5" y="460.5" width="2" height="2" fill="#2a5a2a"/>
<polygon points="531.10,493.60 527.20,491.35 527.20,486.85 531.10,484.60 535.00,486.85 535.00,491.35" fill="#5aaf5a" stroke="#3b8a3b" stroke-width="0.9"/>
<rect x="530.1" y="488.1" width="2" height="2" fill="#2a5a2a"/>
<polygon points="521.50,503.20 517.60,500.95 517.60,496.45 521.50,494.20 525.40,496.45 525.40,500.95" fill="#5aaf5a" stroke="#3b8a3b" stroke-width="0.9"/>
<rect x="520.5" y="497.7" width="2" height="2" fill="#2a5a2a"/>
<polygon points="541.80,533.50 537.90,531.25 537.90,526.75 541.80,524.50 545.70,526.75 545.70,531.25" fill="#5aaf5a" stroke="#3b8a3b" stroke-width="0.9"/>
<rect x="540.8" y="528.0" width="2" height="2" fill="#2a5a2a"/>
<polygon points="477.90,536.50 474.00,534.25 474.00,529.75 477.90,527.50 481.80,529.75 481.80,534.25" fill="#5aaf5a" stroke="#3b8a3b" stroke-width="0.9"/>
<rect x="476.9" y="531.0" width="2" height="2" fill="#2a5a2a"/>
<polygon points="485.30,570.40 481.40,568.15 481.40,563.65 485.30,561.40 489.20,563.65 489.20,568.15" fill="#5aaf5a" stroke="#3b8a3b" stroke-width="0.9"/>
<rect x="484.3" y="564.9" width="2" height="2" fill="#2a5a2a"/>
<polygon points="567.60,472.50 563.79,470.30 563.79,465.90 567.60,463.70 571.41,465.90 571.41,470.30" fill="#8fb3c8" stroke="#5f8398" stroke-width="0.8"/>
</g>
<line x1="109.9" y1="606.9" x2="108.5" y2="630" stroke="#ff7f5a" stroke-width="1.4"/>
<path d="M105.2 627.5L108.3 634.5 111.4 627.5z" fill="#ff7f5a"/>
<line x1="109.9" y1="606.9" x2="131" y2="612.5" stroke="#36c26b" stroke-width="1.6"/>
<path d="M129.5 609.5L135.5 613.8 129 615.3z" fill="#2f9e58"/>
<line x1="109.9" y1="606.9" x2="121.5" y2="600" stroke="#0000ff" stroke-width="1.6"/>
<circle cx="122" cy="599.5" r="1.8" fill="#0000ff"/>
<text x="124.5" y="595" style="font-family:'Liberation Sans',sans-serif;font-style:italic;font-weight:bold;font-size:10.5px" fill="#000">c</text><circle cx="133" cy="589.3" r="1.25" fill="#000"/>
<text x="133.5" y="608" style="font-family:'Liberation Sans',sans-serif;font-style:italic;font-weight:bold;font-size:10.5px" fill="#000">b</text><circle cx="143.5" cy="602.5" r="1.25" fill="#000"/>
<text x="111.8" y="625" style="font-family:'Liberation Sans',sans-serif;font-style:italic;font-weight:bold;font-size:10.5px" fill="#000">a</text><circle cx="121.5" cy="619.3" r="1.25" fill="#000"/>
</svg>
</body></html>
